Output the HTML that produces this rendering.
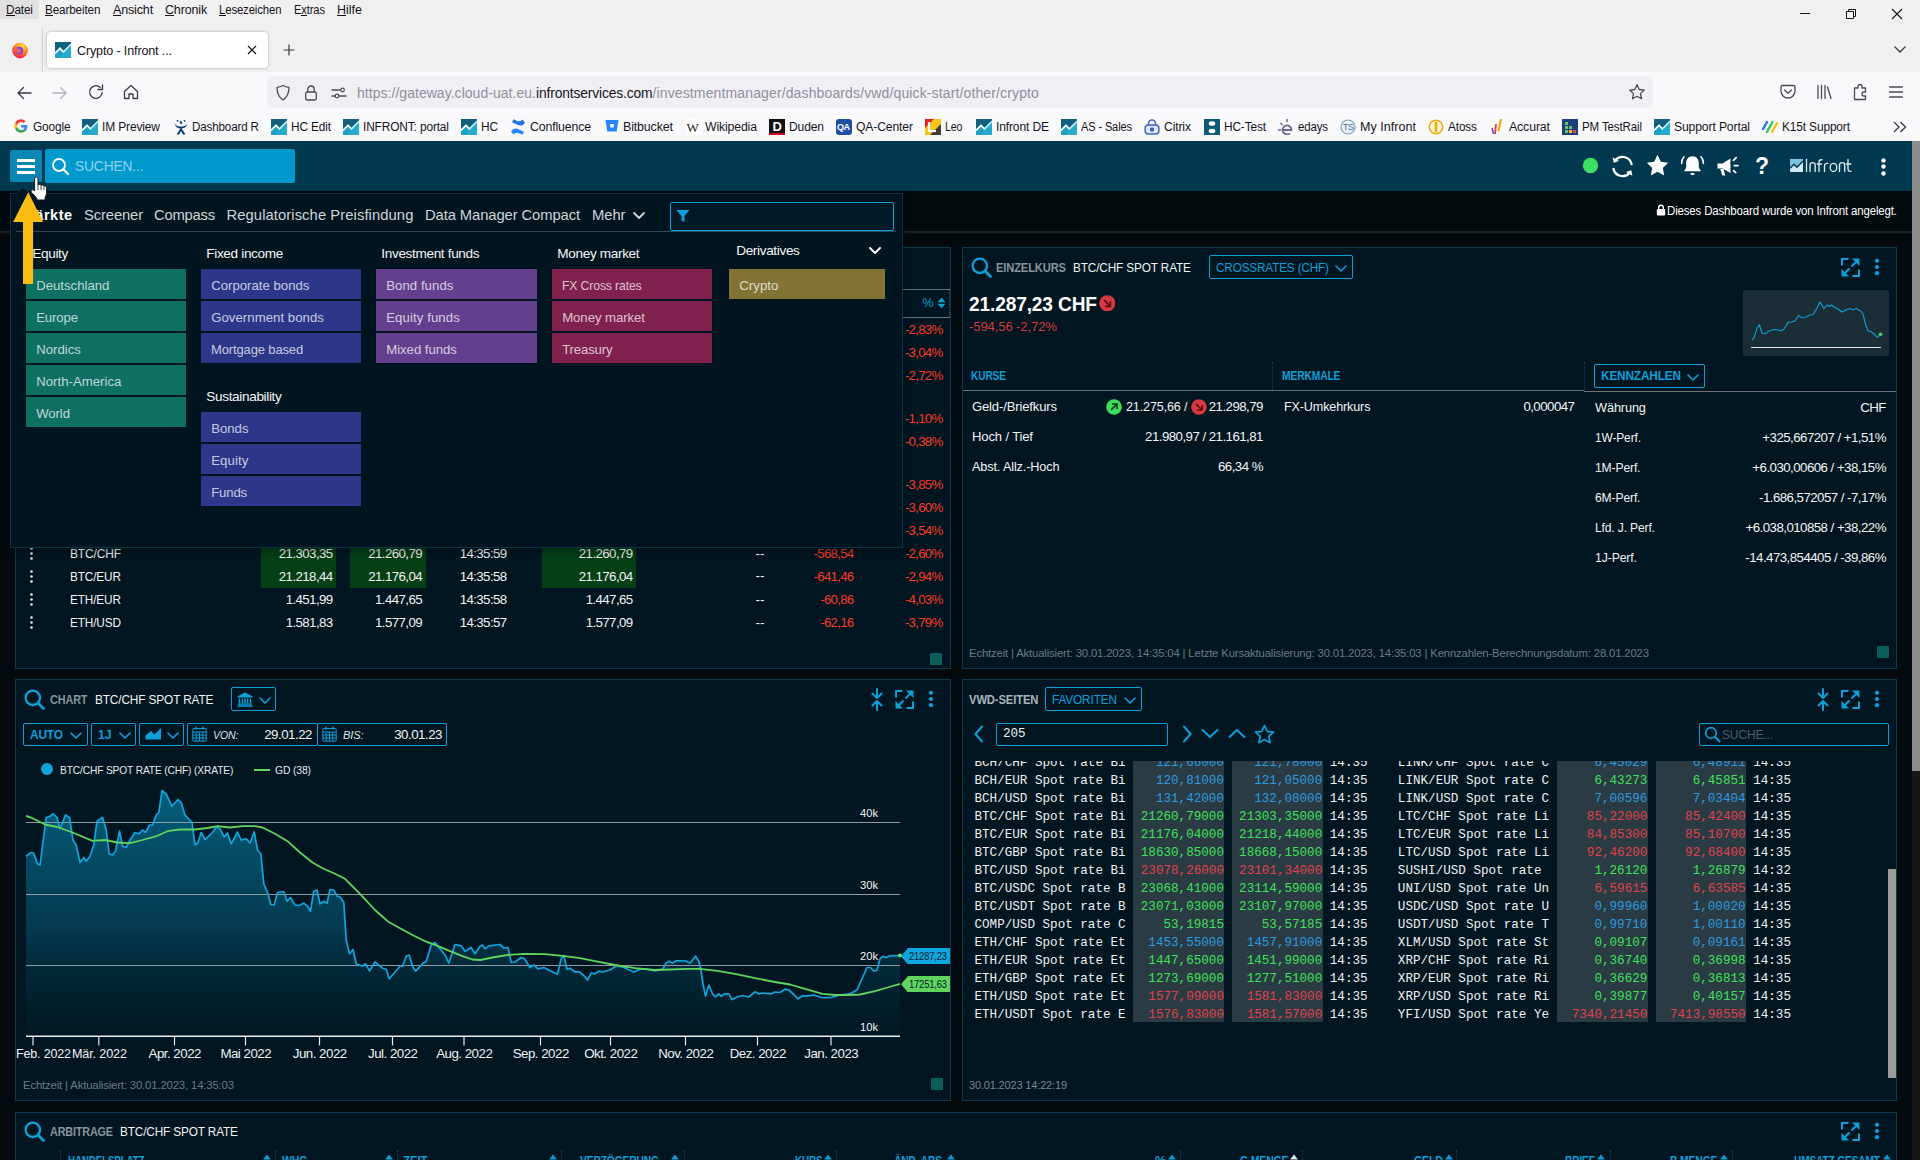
<!DOCTYPE html>
<html lang="de"><head><meta charset="utf-8"><title>Crypto - Infront</title><style>
html,body{margin:0;padding:0;}
body{width:1920px;height:1160px;overflow:hidden;position:relative;background:#02090d;font-family:"Liberation Sans",sans-serif;}
#r{position:absolute;left:0;top:0;width:1920px;height:1160px;overflow:hidden;}
#r div,#r span,#r svg{position:absolute;}
.t{white-space:pre;}
.m{font-family:"Liberation Mono",monospace;}
</style></head><body><div id="r">
<div style="left:0px;top:0px;width:1920px;height:72px;background:#f0f0f1;"></div>
<div style="left:0px;top:72px;width:1920px;height:69px;background:#f9f9fb;"></div>
<div style="left:0px;top:0px;width:39px;height:19px;background:#e1e1e3;"></div>
<span class="t" style="left:6.00px;top:1.50px;font-size:12.5px;line-height:16px;color:#15141a;letter-spacing:-0.150px;transform:scaleX(0.9444);transform-origin:0 50%;">Datei</span>
<div style="left:6px;top:15px;width:9px;height:1px;background:#15141a;"></div>
<span class="t" style="left:45.00px;top:1.50px;font-size:12.5px;line-height:16px;color:#15141a;letter-spacing:-0.150px;transform:scaleX(0.9387);transform-origin:0 50%;">Bearbeiten</span>
<div style="left:45px;top:15px;width:8px;height:1px;background:#15141a;"></div>
<span class="t" style="left:113.00px;top:1.50px;font-size:12.5px;line-height:16px;color:#15141a;letter-spacing:-0.142px;">Ansicht</span>
<div style="left:113px;top:15px;width:8px;height:1px;background:#15141a;"></div>
<span class="t" style="left:165.00px;top:1.50px;font-size:12.5px;line-height:16px;color:#15141a;letter-spacing:-0.153px;">Chronik</span>
<div style="left:165px;top:15px;width:9px;height:1px;background:#15141a;"></div>
<span class="t" style="left:219.00px;top:1.50px;font-size:12.5px;line-height:16px;color:#15141a;letter-spacing:-0.150px;transform:scaleX(0.9097);transform-origin:0 50%;">Lesezeichen</span>
<div style="left:219px;top:15px;width:7px;height:1px;background:#15141a;"></div>
<span class="t" style="left:294.00px;top:1.50px;font-size:12.5px;line-height:16px;color:#15141a;letter-spacing:-0.150px;transform:scaleX(0.8936);transform-origin:0 50%;">Extras</span>
<div style="left:301px;top:15px;width:6px;height:1px;background:#15141a;"></div>
<span class="t" style="left:337.00px;top:1.50px;font-size:12.5px;line-height:16px;color:#15141a;">Hilfe</span>
<div style="left:337px;top:15px;width:9px;height:1px;background:#15141a;"></div>
<svg style="left:1795px;top:4px;" width="20" height="20" viewBox="0 0 20 20"><path d="M5 9.5H15" stroke="#15141a" stroke-width="1" fill="none"/></svg>
<svg style="left:1841px;top:4px;" width="20" height="20" viewBox="0 0 20 20"><path d="M5.5 7.5h7v7h-7zM7.5 7.5v-2h7v7h-2" stroke="#15141a" stroke-width="1" fill="none"/></svg>
<svg style="left:1887px;top:4px;" width="20" height="20" viewBox="0 0 20 20"><path d="M5 5L15 15M15 5L5 15" stroke="#15141a" stroke-width="1.1" fill="none"/></svg>
<svg style="left:11px;top:41px;" width="18" height="18" viewBox="0 0 18 18"><defs><radialGradient id="fx" cx="0.65" cy="0.2" r="0.9"><stop offset="0" stop-color="#ffe14a"/><stop offset="0.45" stop-color="#ff8a16"/><stop offset="0.8" stop-color="#ff3647"/><stop offset="1" stop-color="#e31587"/></radialGradient></defs>
<circle cx="9" cy="9.6" r="7.8" fill="url(#fx)"/><path d="M9 1.5c1 1.6 2.6 2 3.2 3.6-1-.5-2-.4-2.600 0z" fill="#ffbd4f"/><circle cx="8.3" cy="9.6" r="3.9" fill="#7542e5"/><path d="M4 8c1.500-1.500 3.500-.5 5 .3 1 .5 1.800 1.400 1.200 2.600-1 2-4.500 1.700-5.800-.4z" fill="#ff7139" opacity=".75"/></svg>
<div style="left:42px;top:28px;width:1px;height:44px;background:#cfcfd8;"></div>
<div style="left:47px;top:32px;width:221px;height:36px;background:#ffffff;border-radius:4px;box-shadow:0 0 3px rgba(0,0,0,.3);"></div>
<svg style="left:55px;top:42px;" width="16" height="16" viewBox="0 0 16 16"><rect width="16" height="16" fill="#1fa0c4"/><path d="M0 16V10L5 5l3.500 3.500L16 1V0H0z" fill="#12607e"/><path d="M0 11.500L5 6.500l3.500 3.500L16 2.500" stroke="#fff" stroke-width="1.700" fill="none"/><path d="M8.500 10L16 2.500V16H5z" fill="#2fb3d3" opacity=".55"/></svg>
<span class="t" style="left:77.00px;top:41.50px;font-size:13px;line-height:17px;color:#15141a;letter-spacing:-0.150px;transform:scaleX(0.9664);transform-origin:0 50%;">Crypto - Infront ...</span>
<svg style="left:246px;top:44px;" width="12" height="12" viewBox="0 0 12 12"><path d="M2 2L10 10M10 2L2 10" stroke="#15141a" stroke-width="1.2" fill="none"/></svg>
<svg style="left:282px;top:43px;" width="14" height="14" viewBox="0 0 14 14"><path d="M7 1.500V12.500M1.500 7H12.500" stroke="#3a3944" stroke-width="1.2" fill="none"/></svg>
<svg style="left:1893px;top:44px;" width="14" height="10" viewBox="0 0 14 10"><path d="M1.500 2.500L7 8L12.500 2.500" stroke="#3a3944" stroke-width="1.3" fill="none"/></svg>
<svg style="left:15px;top:84px;" width="18" height="18" viewBox="0 0 18 18"><path d="M16 9H3M8.500 3.500L3 9l5.500 5.500" stroke="#3a3944" stroke-width="1.300" fill="none" stroke-linecap="round" stroke-linejoin="round"/></svg>
<svg style="left:51px;top:84px;" width="18" height="18" viewBox="0 0 18 18"><path d="M2 9H15M9.500 3.500L15 9l-5.500 5.500" stroke="#b4b4bc" stroke-width="1.300" fill="none" stroke-linecap="round" stroke-linejoin="round"/></svg>
<svg style="left:87px;top:83px;" width="18" height="18" viewBox="0 0 18 18"><path d="M15.200 9.500a6.300 6.300 0 1 1-2-5.100" stroke="#3a3944" stroke-width="1.300" fill="none" stroke-linecap="round"/><path d="M15.500 2v4.500H11" stroke="#3a3944" stroke-width="1.300" fill="none" stroke-linejoin="round" stroke-linecap="round"/></svg>
<svg style="left:122px;top:83px;" width="18" height="18" viewBox="0 0 18 18"><path d="M2.500 8.500L9 2.500l6.500 6V15.500h-4.500V11h-4v4.500H2.500z" stroke="#3a3944" stroke-width="1.300" fill="none" stroke-linejoin="round"/></svg>
<div style="left:267px;top:76px;width:1386px;height:32px;background:#f0f0f4;border-radius:4px;"></div>
<svg style="left:275px;top:84px;" width="16" height="18" viewBox="0 0 16 18"><path d="M8 1.500c2 1.200 4 1.700 6 1.800c0 5.500-1.800 10-6 12.700C3.800 13.300 2 8.800 2 3.300C4 3.200 6 2.700 8 1.500z" stroke="#4a4a55" stroke-width="1.300" fill="none" stroke-linejoin="round"/></svg>
<svg style="left:304px;top:84px;" width="14" height="18" viewBox="0 0 14 18"><rect x="1.700" y="8" width="10.600" height="8" rx="1.500" stroke="#4a4a55" stroke-width="1.300" fill="none"/><path d="M3.800 8V5.200a3.200 3.200 0 0 1 6.400 0V8" stroke="#4a4a55" stroke-width="1.300" fill="none"/></svg>
<svg style="left:331px;top:86px;" width="16" height="14" viewBox="0 0 16 14"><path d="M1 4H9M1 10H4M8 10H15" stroke="#4a4a55" stroke-width="1.300" fill="none" stroke-linecap="round"/><circle cx="11.500" cy="4" r="1.800" stroke="#4a4a55" stroke-width="1.200" fill="none"/><circle cx="6" cy="10" r="1.800" stroke="#4a4a55" stroke-width="1.200" fill="none"/></svg>
<span class="t" style="left:357.00px;top:84.00px;font-size:14px;line-height:18px;color:#8f8f9d;letter-spacing:0.036px;">https://gateway.cloud-uat.eu.</span>
<span class="t" style="left:536.00px;top:84.00px;font-size:14px;line-height:18px;color:#15141a;letter-spacing:-0.150px;transform:scaleX(0.9882);transform-origin:0 50%;">infrontservices.com</span>
<span class="t" style="left:652.50px;top:84.00px;font-size:14px;line-height:18px;color:#8f8f9d;letter-spacing:0.130px;">/investmentmanager/dashboards/vwd/quick-start/other/crypto</span>
<svg style="left:1628px;top:83px;" width="18" height="18" viewBox="0 0 18 18"><path d="M9 1.800l2.200 4.700 5 .6-3.700 3.500 1 5.100L9 13.200l-4.500 2.500 1-5.100L1.800 7.100l5-.6z" stroke="#4a4a55" stroke-width="1.300" fill="none" stroke-linejoin="round"/></svg>
<svg style="left:1779px;top:84px;" width="18" height="16" viewBox="0 0 18 16"><path d="M3.500 1.500h11a1.500 1.500 0 0 1 1.500 1.500v4a7 7 0 0 1-14 0V3a1.500 1.500 0 0 1 1.500-1.500z" stroke="#4a4a55" stroke-width="1.300" fill="none"/><path d="M5.500 6L9 9.300 12.500 6" stroke="#4a4a55" stroke-width="1.300" fill="none" stroke-linecap="round" stroke-linejoin="round"/></svg>
<svg style="left:1816px;top:84px;" width="16" height="16" viewBox="0 0 16 16"><path d="M2 1.500V14.500M5.500 1.500V14.500M9 1.500V14.500M11.500 3L15 14.500" stroke="#4a4a55" stroke-width="1.300" fill="none" stroke-linecap="round"/></svg>
<svg style="left:1852px;top:83px;" width="16" height="18" viewBox="0 0 16 18"><path d="M6 3.500a2 2 0 0 1 4 0V5h3.500v4H12a2 2 0 0 0 0 4h1.500v3.500h-11V5H6z" stroke="#4a4a55" stroke-width="1.300" fill="none" stroke-linejoin="round"/></svg>
<svg style="left:1888px;top:85px;" width="16" height="14" viewBox="0 0 16 14"><path d="M1.500 2H14.500M1.500 7H14.500M1.500 12H14.500" stroke="#4a4a55" stroke-width="1.300" fill="none" stroke-linecap="round"/></svg>
<svg style="left:14px;top:119px;" width="14" height="14" viewBox="0 0 14 14"><path d="M13.400 7.200c0-.5 0-.9-.1-1.300H7v2.500h3.600c-.2.800-.6 1.500-1.300 2v1.700h2.100c1.300-1.200 2-2.900 2-4.900z" fill="#4285f4"/><path d="M7 13.700c1.800 0 3.300-.6 4.400-1.600l-2.100-1.700c-.6.400-1.400.600-2.300.600-1.700 0-3.200-1.200-3.700-2.700H1.100v1.700C2.200 12.200 4.400 13.700 7 13.700z" fill="#34a853"/><path d="M3.300 8.300a4 4 0 0 1 0-2.600V4H1.100a6.700 6.700 0 0 0 0 6z" fill="#fbbc05"/><path d="M7 3c1 0 1.900.3 2.600 1l1.900-1.900C10.300 1 8.800.3 7 .3 4.400.3 2.200 1.800 1.100 4l2.200 1.700C3.800 4.200 5.300 3 7 3z" fill="#ea4335"/></svg>
<span class="t" style="left:32.50px;top:119.00px;font-size:12.5px;line-height:16px;color:#15141a;letter-spacing:-0.150px;transform:scaleX(0.9478);transform-origin:0 50%;">Google</span>
<svg style="left:82px;top:119px;" width="16" height="16" viewBox="0 0 16 16"><rect width="16" height="16" fill="#1fa0c4"/><path d="M0 16V10L5 5l3.500 3.500L16 1V0H0z" fill="#12607e"/><path d="M0 11.500L5 6.500l3.500 3.500L16 2.500" stroke="#fff" stroke-width="1.700" fill="none"/><path d="M8.500 10L16 2.500V16H5z" fill="#2fb3d3" opacity=".55"/></svg>
<span class="t" style="left:102.00px;top:119.00px;font-size:12.5px;line-height:16px;color:#15141a;letter-spacing:-0.150px;transform:scaleX(0.9591);transform-origin:0 50%;">IM Preview</span>
<svg style="left:172.5px;top:119px;" width="16" height="16" viewBox="0 0 16 16"><circle cx="8" cy="3.600" r="1.300" fill="#0b3d78"/><circle cx="4.500" cy="1.800" r=".9" fill="#0b3d78"/><circle cx="11.500" cy="1.800" r=".9" fill="#0b3d78"/><path d="M1.500 4.500C3 9 5.500 9.500 8 9.500S13 9 14.500 4.500C13 7 10.500 7.500 8 7.500S3 7 1.500 4.500zM8 8.500L3.500 15.500h2.600L8 12l1.900 3.500h2.600z" fill="#0b3d78"/></svg>
<span class="t" style="left:192.00px;top:119.00px;font-size:12.5px;line-height:16px;color:#15141a;letter-spacing:-0.150px;transform:scaleX(0.9285);transform-origin:0 50%;">Dashboard R</span>
<svg style="left:271px;top:119px;" width="16" height="16" viewBox="0 0 16 16"><rect width="16" height="16" fill="#1fa0c4"/><path d="M0 16V10L5 5l3.500 3.500L16 1V0H0z" fill="#12607e"/><path d="M0 11.500L5 6.500l3.500 3.500L16 2.500" stroke="#fff" stroke-width="1.700" fill="none"/><path d="M8.500 10L16 2.500V16H5z" fill="#2fb3d3" opacity=".55"/></svg>
<span class="t" style="left:291.00px;top:119.00px;font-size:12.5px;line-height:16px;color:#15141a;letter-spacing:-0.150px;transform:scaleX(0.9484);transform-origin:0 50%;">HC Edit</span>
<svg style="left:343px;top:119px;" width="16" height="16" viewBox="0 0 16 16"><rect width="16" height="16" fill="#1fa0c4"/><path d="M0 16V10L5 5l3.500 3.500L16 1V0H0z" fill="#12607e"/><path d="M0 11.500L5 6.500l3.500 3.500L16 2.500" stroke="#fff" stroke-width="1.700" fill="none"/><path d="M8.500 10L16 2.500V16H5z" fill="#2fb3d3" opacity=".55"/></svg>
<span class="t" style="left:363.00px;top:119.00px;font-size:12.5px;line-height:16px;color:#15141a;letter-spacing:-0.150px;transform:scaleX(0.9525);transform-origin:0 50%;">INFRONT: portal</span>
<svg style="left:461px;top:119px;" width="16" height="16" viewBox="0 0 16 16"><rect width="16" height="16" fill="#1fa0c4"/><path d="M0 16V10L5 5l3.500 3.500L16 1V0H0z" fill="#12607e"/><path d="M0 11.500L5 6.500l3.500 3.500L16 2.500" stroke="#fff" stroke-width="1.700" fill="none"/><path d="M8.500 10L16 2.500V16H5z" fill="#2fb3d3" opacity=".55"/></svg>
<span class="t" style="left:481.00px;top:119.00px;font-size:12.5px;line-height:16px;color:#15141a;letter-spacing:-0.150px;transform:scaleX(0.9491);transform-origin:0 50%;">HC</span>
<svg style="left:510px;top:119px;" width="16" height="16" viewBox="0 0 16 16"><path d="M1 12.500c2.500-4 5-3.500 8-2l5 2.300-1.500 3c-4-2-6-3.500-9-.3z" fill="#2684ff"/><path d="M15 3.500c-2.500 4-5 3.500-8 2L2 3.200 3.500.2c4 2 6 3.500 9 .3z" fill="#2173e6"/></svg>
<span class="t" style="left:530.00px;top:119.00px;font-size:12.5px;line-height:16px;color:#15141a;letter-spacing:-0.150px;transform:scaleX(0.9856);transform-origin:0 50%;">Confluence</span>
<svg style="left:605px;top:119px;" width="14" height="14" viewBox="0 0 14 14"><path d="M.5 1h13l-1.800 11.500H2.300z" fill="#2684ff"/><path d="M5 5h4l-.5 3.500h-3z" fill="#fff"/></svg>
<span class="t" style="left:623.00px;top:119.00px;font-size:12.5px;line-height:16px;color:#15141a;letter-spacing:-0.150px;transform:scaleX(0.9957);transform-origin:0 50%;">Bitbucket</span>
<div style="left:685.5px;top:119px;width:16px;height:16px;background:#fff;border-radius:3px;"></div>
<span class="t" style="left:686.50px;top:119.00px;font-size:13px;line-height:17px;color:#222;font-family:'Liberation Serif',serif;">W</span>
<span class="t" style="left:705.00px;top:119.00px;font-size:12.5px;line-height:16px;color:#15141a;letter-spacing:-0.150px;transform:scaleX(0.9813);transform-origin:0 50%;">Wikipedia</span>
<div style="left:769px;top:119px;width:16px;height:16px;background:#111;"></div>
<div style="left:769px;top:133px;width:16px;height:2px;background:#d8001a;"></div>
<span class="t" style="left:772.50px;top:118.00px;font-size:13px;line-height:17px;color:#fff;font-weight:700;">D</span>
<span class="t" style="left:789.00px;top:119.00px;font-size:12.5px;line-height:16px;color:#15141a;letter-spacing:-0.150px;transform:scaleX(0.9658);transform-origin:0 50%;">Duden</span>
<div style="left:836px;top:119px;width:16px;height:16px;background:#1f4fa3;border-radius:3px;"></div>
<span class="t" style="left:837.00px;top:120.50px;font-size:9px;line-height:12px;color:#fff;font-weight:700;letter-spacing:-0.600px;">QA</span>
<span class="t" style="left:856.00px;top:119.00px;font-size:12.5px;line-height:16px;color:#15141a;letter-spacing:-0.150px;transform:scaleX(0.9736);transform-origin:0 50%;">QA-Center</span>
<div style="left:925px;top:119px;width:16px;height:16px;background:#f3c61a;"></div>
<svg style="left:925px;top:119px;" width="16" height="16" viewBox="0 0 16 16"><path d="M0 0L9 0L0 9z" fill="#d22"/><path d="M16 5v11H5z" fill="#224" opacity=".85"/><path d="M4 3v9h7" stroke="#fff" stroke-width="2.200" fill="none"/></svg>
<span class="t" style="left:945.00px;top:119.00px;font-size:12.5px;line-height:16px;color:#15141a;letter-spacing:-0.150px;transform:scaleX(0.8502);transform-origin:0 50%;">Leo</span>
<svg style="left:976px;top:119px;" width="16" height="16" viewBox="0 0 16 16"><rect width="16" height="16" fill="#1fa0c4"/><path d="M0 16V10L5 5l3.500 3.500L16 1V0H0z" fill="#12607e"/><path d="M0 11.500L5 6.500l3.500 3.500L16 2.500" stroke="#fff" stroke-width="1.700" fill="none"/><path d="M8.500 10L16 2.500V16H5z" fill="#2fb3d3" opacity=".55"/></svg>
<span class="t" style="left:996.00px;top:119.00px;font-size:12.5px;line-height:16px;color:#15141a;letter-spacing:-0.150px;transform:scaleX(0.9649);transform-origin:0 50%;">Infront DE</span>
<svg style="left:1061px;top:119px;" width="16" height="16" viewBox="0 0 16 16"><rect width="16" height="16" fill="#1fa0c4"/><path d="M0 16V10L5 5l3.500 3.500L16 1V0H0z" fill="#12607e"/><path d="M0 11.500L5 6.500l3.500 3.500L16 2.500" stroke="#fff" stroke-width="1.700" fill="none"/><path d="M8.500 10L16 2.500V16H5z" fill="#2fb3d3" opacity=".55"/></svg>
<span class="t" style="left:1081.00px;top:119.00px;font-size:12.5px;line-height:16px;color:#15141a;letter-spacing:-0.150px;transform:scaleX(0.8835);transform-origin:0 50%;">AS - Sales</span>
<svg style="left:1144px;top:119px;" width="16" height="16" viewBox="0 0 16 16"><rect x="1.200" y="6" width="13.600" height="9" rx="3" stroke="#3a63c8" stroke-width="1.500" fill="#dfe8ff"/><path d="M4.500 6V4.500a3.500 3.500 0 0 1 7 0V6" stroke="#3a63c8" stroke-width="1.500" fill="none"/><rect x="6" y="8.500" width="4" height="4" rx="1" fill="#3a63c8"/></svg>
<span class="t" style="left:1164.00px;top:119.00px;font-size:12.5px;line-height:16px;color:#15141a;letter-spacing:-0.150px;transform:scaleX(0.9740);transform-origin:0 50%;">Citrix</span>
<div style="left:1204px;top:119px;width:16px;height:16px;background:#0c5a7a;"></div>
<svg style="left:1204px;top:119px;" width="16" height="16" viewBox="0 0 16 16"><ellipse cx="8" cy="4.500" rx="3.300" ry="2.300" fill="#fff"/><ellipse cx="8" cy="12" rx="3.300" ry="2.300" fill="#fff"/></svg>
<span class="t" style="left:1224.00px;top:119.00px;font-size:12.5px;line-height:16px;color:#15141a;letter-spacing:-0.150px;transform:scaleX(0.9492);transform-origin:0 50%;">HC-Test</span>
<svg style="left:1278px;top:119px;" width="16" height="16" viewBox="0 0 16 16"><path d="M4.500 11h9a4.500 4.500 0 1 0-1.500 3.300" stroke="#6d6a8a" stroke-width="1.800" fill="none"/><path d="M0 11h3M2.500 4l2 2M9 0v3" stroke="#6d6a8a" stroke-width="1.500"/></svg>
<span class="t" style="left:1298.00px;top:119.00px;font-size:12.5px;line-height:16px;color:#15141a;letter-spacing:-0.150px;transform:scaleX(0.9155);transform-origin:0 50%;">edays</span>
<svg style="left:1340px;top:119px;" width="16" height="16" viewBox="0 0 16 16"><circle cx="8" cy="8" r="7" stroke="#7f9fbe" stroke-width="1.200" fill="#eef3f8"/></svg>
<span class="t" style="left:1343.00px;top:121.00px;font-size:9px;line-height:12px;color:#3f6f9f;letter-spacing:-0.500px;">TS</span>
<span class="t" style="left:1360.00px;top:119.00px;font-size:12.5px;line-height:16px;color:#15141a;letter-spacing:0.043px;">My Infront</span>
<svg style="left:1428px;top:119px;" width="16" height="16" viewBox="0 0 16 16"><circle cx="8" cy="8" r="6.800" stroke="#f0a800" stroke-width="1.400" fill="#fff6d8"/><path d="M8 4v8" stroke="#f0a800" stroke-width="2.600" stroke-linecap="round"/></svg>
<span class="t" style="left:1448.00px;top:119.00px;font-size:12.5px;line-height:16px;color:#15141a;letter-spacing:-0.150px;transform:scaleX(0.9455);transform-origin:0 50%;">Atoss</span>
<svg style="left:1490px;top:119px;" width="14" height="16" viewBox="0 0 14 16"><path d="M2 9l1.500 6" stroke="#6a4fc8" stroke-width="1.600"/><path d="M6 5l-1 10" stroke="#e63946" stroke-width="1.800"/><path d="M11 0L8.500 12" stroke="#f4a300" stroke-width="2"/></svg>
<span class="t" style="left:1509.00px;top:119.00px;font-size:12.5px;line-height:16px;color:#15141a;letter-spacing:-0.150px;transform:scaleX(0.9885);transform-origin:0 50%;">Accurat</span>
<div style="left:1562px;top:119px;width:16px;height:16px;background:#1d3f7a;"></div>
<svg style="left:1562px;top:119px;" width="16" height="16" viewBox="0 0 16 16"><rect x="3" y="3" width="3" height="3" fill="#65c466"/><rect x="3" y="7" width="3" height="3" fill="#65c466"/><rect x="3" y="11" width="3" height="3" fill="#65c466"/><rect x="7" y="7" width="3" height="3" fill="#65c466"/><rect x="7" y="11" width="3" height="3" fill="#f4c20d"/><rect x="11" y="11" width="3" height="3" fill="#e5484d"/></svg>
<span class="t" style="left:1582.00px;top:119.00px;font-size:12.5px;line-height:16px;color:#15141a;letter-spacing:-0.150px;transform:scaleX(0.9235);transform-origin:0 50%;">PM TestRail</span>
<svg style="left:1654px;top:119px;" width="16" height="16" viewBox="0 0 16 16"><rect width="16" height="16" fill="#1fa0c4"/><path d="M0 16V10L5 5l3.500 3.500L16 1V0H0z" fill="#12607e"/><path d="M0 11.500L5 6.500l3.500 3.500L16 2.500" stroke="#fff" stroke-width="1.700" fill="none"/><path d="M8.500 10L16 2.500V16H5z" fill="#2fb3d3" opacity=".55"/></svg>
<span class="t" style="left:1674.00px;top:119.00px;font-size:12.5px;line-height:16px;color:#15141a;letter-spacing:-0.150px;transform:scaleX(0.9748);transform-origin:0 50%;">Support Portal</span>
<svg style="left:1762px;top:119px;" width="16" height="16" viewBox="0 0 16 16"><path d="M1 10L5 3" stroke="#2f6fed" stroke-width="2.400" stroke-linecap="round"/><path d="M5 13L10.500 3" stroke="#34c759" stroke-width="2.400" stroke-linecap="round"/><path d="M10 13L15 4" stroke="#f4c20d" stroke-width="2.400" stroke-linecap="round"/></svg>
<span class="t" style="left:1782.00px;top:119.00px;font-size:12.5px;line-height:16px;color:#15141a;letter-spacing:-0.150px;transform:scaleX(0.9534);transform-origin:0 50%;">K15t Support</span>
<svg style="left:1892px;top:120px;" width="16" height="14" viewBox="0 0 16 14"><path d="M2 2l5 5-5 5M8.500 2l5 5-5 5" stroke="#3a3944" stroke-width="1.300" fill="none"/></svg>
<div style="left:0px;top:141px;width:1912px;height:50px;background:#003850;"></div>
<div style="left:0px;top:191px;width:1912px;height:41px;background:#020a0e;"></div>
<div style="left:0px;top:231px;width:1912px;height:1px;background:#212527;"></div>
<div style="left:0px;top:232px;width:1912px;height:1px;background:#1a1e20;"></div>
<div style="left:0px;top:233px;width:1912px;height:927px;background:#020a0e;"></div>
<div style="left:0px;top:233px;width:1912px;height:1px;background:#0c1012;"></div>
<div style="left:1912px;top:141px;width:8px;height:1019px;background:#161616;"></div>
<div style="left:1912px;top:141px;width:8px;height:630px;background:#8c8c8c;"></div>
<div style="left:10px;top:150px;width:32px;height:32px;background:#0b86b5;border-radius:2px;"></div>
<div style="left:17px;top:159.2px;width:18px;height:2.6px;background:#fff;"></div>
<div style="left:17px;top:165.3px;width:18px;height:2.6px;background:#fff;"></div>
<div style="left:17px;top:171.4px;width:18px;height:2.6px;background:#fff;"></div>
<div style="left:45px;top:149px;width:250px;height:34px;background:#0099cc;border-radius:2px;"></div>
<svg style="left:50px;top:156px;" width="20" height="20" viewBox="0 0 20 20"><circle cx="9" cy="9" r="6" stroke="#fff" stroke-width="1.800" fill="none"/><path d="M13.300 13.300L18 18" stroke="#fff" stroke-width="2.200" stroke-linecap="round"/></svg>
<span class="t" style="left:74.50px;top:156.00px;font-size:15.5px;line-height:20px;color:#8fd3ee;letter-spacing:-0.150px;transform:scaleX(0.8874);transform-origin:0 50%;">SUCHEN...</span>
<svg style="left:1582px;top:157px;" width="17" height="17" viewBox="0 0 17 17"><circle cx="8.500" cy="8.500" r="7.700" fill="#3ee063"/></svg>
<svg style="left:1609.5px;top:153.5px;" width="25" height="25" viewBox="0 0 25 25"><path d="M21.700 11A9.300 9.300 0 0 0 5.300 6.300" stroke="#fff" stroke-width="2.200" fill="none"/><path d="M3.300 14A9.300 9.300 0 0 0 19.700 18.700" stroke="#fff" stroke-width="2.200" fill="none"/><path d="M2.600 3.200l1.100 5.600 5.300-1.700z" fill="#fff"/><path d="M22.400 21.800l-1.100-5.600-5.300 1.700z" fill="#fff"/></svg>
<svg style="left:1645.5px;top:153.5px;" width="23" height="23" viewBox="0 0 23 23"><path d="M11.500 .8l3.300 6.900 7.400 1-5.400 5.200 1.400 7.500-6.700-3.700-6.700 3.700 1.400-7.500L.8 8.700l7.400-1z" fill="#fff"/></svg>
<svg style="left:1679.5px;top:153.5px;" width="25" height="25" viewBox="0 0 25 25"><path d="M12.500 2.300c-3.900 0-6.300 2.900-6.300 6.800v4.300L4 17.300h17l-2.200-3.900V9.100c0-3.900-2.400-6.800-6.300-6.800z" fill="#fff"/><path d="M10.300 19a2.200 2.200 0 0 0 4.400 0z" fill="#fff"/><path d="M4 2.800A10 10 0 0 0 1.600 9.500M21 2.800A10 10 0 0 1 23.400 9.500" stroke="#fff" stroke-width="1.600" fill="none" stroke-linecap="round"/></svg>
<svg style="left:1714.5px;top:153.5px;" width="25" height="25" viewBox="0 0 25 25"><path d="M2.500 9.500h5L15.500 4.500V19L7.500 14.500h-5z" fill="#fff"/><path d="M5.300 15l2 6.500h3l-1.800-6.500z" fill="#fff"/><path d="M15.500 8.700a3.500 3.500 0 0 1 0 6.200" stroke="#003850" stroke-width="1.300" fill="none"/><path d="M18.500 6.300l2.700-2.700M19.300 11.700H23M18.500 16.700l2.200 2" stroke="#fff" stroke-width="1.700" stroke-linecap="round"/></svg>
<span class="t" style="left:1754.98px;top:151.00px;font-size:23px;line-height:30px;color:#fff;font-weight:700;">?</span>
<svg style="left:1790px;top:159px;" width="13" height="13" viewBox="0 0 13 13"><rect width="13" height="13" fill="#cfe9f5"/><path d="M0 13V8.500L4 4.500l3 3L13 1.200V0H0z" fill="#7cc4e2"/><path d="M0 9.300L4 5.300l3 3L13 2" stroke="#003850" stroke-width="1.500" fill="none"/></svg>
<svg style="left:1805px;top:157px;" width="48" height="17" viewBox="0 0 48 17"><g stroke="#dbe9ef" stroke-width="1.350" fill="none" stroke-linecap="round" stroke-linejoin="round"><path d="M1.500 2.500V14.500"/><path d="M5 14.500V8.200a2.600 2.600 0 0 1 5.200 0V14.500"/><path d="M14 14.500V5a2.300 2.300 0 0 1 2.300-2.300H17M12.300 7h4.200"/><path d="M19.500 14.500V9a2.700 2.700 0 0 1 2.700-2.700H23"/><ellipse cx="28.500" cy="10.400" rx="3.300" ry="4.100"/><path d="M34.500 14.500V8.200a2.600 2.600 0 0 1 5.200 0V14.500"/><path d="M43 2.500V12a2.300 2.300 0 0 0 2.300 2.300H46M41.300 7h4.500"/></g></svg>
<svg style="left:1880.5px;top:157.7px;" width="5" height="5" viewBox="0 0 5 5"><circle cx="2.500" cy="2.500" r="2.200" fill="#fff"/></svg>
<svg style="left:1880.5px;top:164.2px;" width="5" height="5" viewBox="0 0 5 5"><circle cx="2.500" cy="2.500" r="2.200" fill="#fff"/></svg>
<svg style="left:1880.5px;top:170.7px;" width="5" height="5" viewBox="0 0 5 5"><circle cx="2.500" cy="2.500" r="2.200" fill="#fff"/></svg>
<svg style="left:1655.5px;top:204px;" width="10" height="12" viewBox="0 0 10 12"><rect x=".8" y="5" width="8.400" height="6.500" rx="1" fill="#fff"/><path d="M2.700 5V3.600a2.300 2.300 0 0 1 4.600 0V5" stroke="#fff" stroke-width="1.400" fill="none"/></svg>
<span class="t" style="left:1667.00px;top:203.00px;font-size:12px;line-height:16px;color:#fff;letter-spacing:-0.150px;transform:scaleX(0.9542);transform-origin:0 50%;">Dieses Dashboard wurde von Infront angelegt.</span>
<div style="left:15px;top:247px;width:934px;height:420px;background:#011621;border:1px solid #0b3a50;"></div>
<div style="left:962px;top:247px;width:933px;height:420px;background:#011621;border:1px solid #0b3a50;"></div>
<div style="left:15px;top:679px;width:934px;height:420px;background:#011621;border:1px solid #0b3a50;"></div>
<div style="left:962px;top:679px;width:933px;height:420px;background:#011621;border:1px solid #0b3a50;"></div>
<div style="left:15px;top:1112px;width:1880px;height:58px;background:#011621;border:1px solid #0b3a50;"></div>
<svg style="left:970.5px;top:257px;" width="21" height="21" viewBox="0 0 21 21"><circle cx="8.800" cy="8.800" r="7.200" stroke="#0d9fd8" stroke-width="2.300" fill="none"/><path d="M14 14L19.500 19.500" stroke="#0d9fd8" stroke-width="2.800" stroke-linecap="round"/></svg>
<span class="t" style="left:996.00px;top:259.50px;font-size:12.5px;line-height:16px;color:#8a949a;font-weight:700;letter-spacing:-0.150px;transform:scaleX(0.8913);transform-origin:0 50%;">EINZELKURS</span>
<span class="t" style="left:1073.00px;top:259.50px;font-size:12.5px;line-height:16px;color:#f2f4f5;letter-spacing:-0.150px;transform:scaleX(0.9445);transform-origin:0 50%;">BTC/CHF SPOT RATE</span>
<div style="left:1209px;top:255px;width:142px;height:22px;border:1px solid #0d9fd8;border-radius:2px;"></div>
<span class="t" style="left:1216.00px;top:259.50px;font-size:12.5px;line-height:16px;color:#0d9fd8;letter-spacing:-0.150px;transform:scaleX(0.9382);transform-origin:0 50%;">CROSSRATES (CHF)</span>
<svg style="left:1335.0px;top:265.0px;" width="12.0" height="7.0" viewBox="0 0 12 7"><path d="M1 1L6 6L11 1" stroke="#0d9fd8" stroke-width="1.6" fill="none" stroke-linecap="round" stroke-linejoin="round"/></svg>
<svg style="left:1840.5px;top:258px;" width="19" height="19" viewBox="0 0 19 19"><g stroke="#0d9fd8" stroke-width="2" fill="none"><path d="M1 7.500V1H7.500"/><path d="M18 11.500V18H11.500"/><path d="M8.500 10.500L2.500 16.500M10.500 8.500L16.500 2.500"/></g><path d="M11 .5H18.500V8z" fill="#0d9fd8"/><path d="M.5 11V18.500H8z" fill="#0d9fd8"/></svg>
<svg style="left:1874px;top:258px;" width="6" height="18" viewBox="0 0 6 18"><circle cx="3" cy="2.800" r="2.100" fill="#0d9fd8"/><circle cx="3" cy="9" r="2.100" fill="#0d9fd8"/><circle cx="3" cy="15.200" r="2.100" fill="#0d9fd8"/></svg>
<span class="t" style="left:969.00px;top:291.50px;font-size:19.5px;line-height:25px;color:#fff;font-weight:700;letter-spacing:-0.150px;transform:scaleX(0.9812);transform-origin:0 50%;">21.287,23 CHF</span>
<svg style="left:1098.7px;top:294.7px;" width="16.6" height="16.6" viewBox="0 0 16 16"><circle cx="8" cy="8" r="7.800" fill="#d7373f"/><path d="M5 5L10.500 10.500M6 11h5V6" stroke="#5a0d12" stroke-width="1.600" fill="none"/></svg>
<span class="t" style="left:969.00px;top:318.00px;font-size:13.5px;line-height:18px;color:#d23c3c;letter-spacing:-0.150px;transform:scaleX(0.9738);transform-origin:0 50%;">-594,56 -2,72%</span>
<div style="left:1743px;top:290px;width:146px;height:66px;background:#1b2d37;border-radius:2px;"></div>
<div style="left:1751px;top:346.5px;width:130px;height:1.6px;background:#e0e0e0;"></div>
<svg style="left:1743px;top:290px;" width="146" height="66" viewBox="0 0 146 66"><polyline points="9.0,50.0 11.0,48.0 14.0,38.0 16.5,35.0 19.0,43.0 22.0,44.0 26.0,41.0 31.0,39.5 35.0,40.0 38.0,41.0 41.0,39.0 45.0,32.5 48.0,32.0 52.0,31.0 55.5,25.5 59.0,28.0 63.0,27.0 67.0,25.0 70.0,24.5 73.5,19.0 77.0,12.0 81.0,18.5 84.0,15.0 86.0,16.5 88.5,15.0 92.0,17.5 95.0,19.0 99.0,22.0 103.0,20.0 107.0,18.5 110.0,20.0 113.0,18.5 117.0,20.5 120.0,24.0 122.5,34.0 125.0,41.0 128.0,41.5 131.0,44.0 134.5,47.5 137.5,44.0" stroke="#0d9fd8" stroke-width="1.100" fill="none"/><circle cx="137.600" cy="44.300" r="1.800" fill="#3ddc5f"/></svg>
<span class="t" style="left:971.00px;top:367.50px;font-size:12.5px;line-height:16px;color:#0d9fd8;font-weight:700;letter-spacing:-0.150px;transform:scaleX(0.8103);transform-origin:0 50%;">KURSE</span>
<span class="t" style="left:1282.00px;top:367.50px;font-size:12.5px;line-height:16px;color:#0d9fd8;font-weight:700;letter-spacing:-0.150px;transform:scaleX(0.8216);transform-origin:0 50%;">MERKMALE</span>
<div style="left:963px;top:390px;width:621px;height:1.3px;background:#6b7378;"></div>
<div style="left:1584px;top:391px;width:312px;height:1.3px;background:#6b7378;"></div>
<div style="left:1272px;top:362px;width:1px;height:28px;border-left:1px dotted #17425a;"></div>
<div style="left:1584px;top:362px;width:1px;height:28px;border-left:1px dotted #17425a;"></div>
<div style="left:1594px;top:364px;width:109px;height:22px;border:1px solid #0d9fd8;border-radius:2px;"></div>
<span class="t" style="left:1600.50px;top:368.00px;font-size:12.5px;line-height:16px;color:#0d9fd8;font-weight:700;letter-spacing:-0.150px;transform:scaleX(0.9438);transform-origin:0 50%;">KENNZAHLEN</span>
<svg style="left:1687.0px;top:373.5px;" width="12.0" height="7.0" viewBox="0 0 12 7"><path d="M1 1L6 6L11 1" stroke="#0d9fd8" stroke-width="1.6" fill="none" stroke-linecap="round" stroke-linejoin="round"/></svg>
<span class="t" style="left:972.00px;top:398.00px;font-size:13.3px;line-height:17px;color:#f2f4f5;letter-spacing:-0.150px;transform:scaleX(0.9816);transform-origin:0 50%;">Geld-/Briefkurs</span>
<svg style="left:1105.5px;top:398.5px;" width="16" height="16" viewBox="0 0 16 16"><circle cx="8" cy="8" r="7.800" fill="#3ddc5f"/><path d="M5 11L10.500 5.500M6 5h5v5" stroke="#0a3d18" stroke-width="1.600" fill="none"/></svg>
<span class="t" style="left:1125.50px;top:397.50px;font-size:13.3px;line-height:17px;color:#f2f4f5;letter-spacing:-0.150px;transform:scaleX(0.9452);transform-origin:0 50%;">21.275,66 /</span>
<svg style="left:1190.5px;top:398.5px;" width="16" height="16" viewBox="0 0 16 16"><circle cx="8" cy="8" r="7.800" fill="#d7373f"/><path d="M5 5L10.500 10.500M6 11h5V6" stroke="#5a0d12" stroke-width="1.600" fill="none"/></svg>
<span class="t" style="left:1208.73px;top:397.50px;font-size:13.3px;line-height:17px;color:#f2f4f5;letter-spacing:-0.550px;">21.298,79</span>
<span class="t" style="left:972.00px;top:427.50px;font-size:13.3px;line-height:17px;color:#f2f4f5;letter-spacing:-0.150px;transform:scaleX(0.9827);transform-origin:0 50%;">Hoch / Tief</span>
<span class="t" style="left:1145.08px;top:427.50px;font-size:13.3px;line-height:17px;color:#f2f4f5;letter-spacing:-0.550px;">21.980,97 / 21.161,81</span>
<span class="t" style="left:972.00px;top:458.20px;font-size:13.3px;line-height:17px;color:#f2f4f5;letter-spacing:-0.150px;transform:scaleX(0.9549);transform-origin:0 50%;">Abst. Allz.-Hoch</span>
<span class="t" style="left:1218.00px;top:458.20px;font-size:13.3px;line-height:17px;color:#f2f4f5;letter-spacing:-0.550px;">66,34 %</span>
<span class="t" style="left:1283.50px;top:398.00px;font-size:13.3px;line-height:17px;color:#f2f4f5;letter-spacing:-0.150px;transform:scaleX(0.9473);transform-origin:0 50%;">FX-Umkehrkurs</span>
<span class="t" style="left:1523.38px;top:398.00px;font-size:13.3px;line-height:17px;color:#f2f4f5;letter-spacing:-0.550px;">0,000047</span>
<span class="t" style="left:1595.00px;top:399.00px;font-size:13.3px;line-height:17px;color:#f2f4f5;letter-spacing:-0.150px;transform:scaleX(0.9609);transform-origin:0 50%;">Währung</span>
<span class="t" style="left:1860.27px;top:399.00px;font-size:13.3px;line-height:17px;color:#f2f4f5;letter-spacing:-0.550px;">CHF</span>
<span class="t" style="left:1595.00px;top:429.00px;font-size:13.3px;line-height:17px;color:#f2f4f5;letter-spacing:-0.150px;transform:scaleX(0.8986);transform-origin:0 50%;">1W-Perf.</span>
<span class="t" style="left:1762.35px;top:429.00px;font-size:13.3px;line-height:17px;color:#f2f4f5;letter-spacing:-0.550px;">+325,667207 / +1,51%</span>
<span class="t" style="left:1595.00px;top:459.00px;font-size:13.3px;line-height:17px;color:#f2f4f5;letter-spacing:-0.150px;transform:scaleX(0.9108);transform-origin:0 50%;">1M-Perf.</span>
<span class="t" style="left:1752.36px;top:459.00px;font-size:13.3px;line-height:17px;color:#f2f4f5;letter-spacing:-0.550px;">+6.030,00606 / +38,15%</span>
<span class="t" style="left:1595.00px;top:489.00px;font-size:13.3px;line-height:17px;color:#f2f4f5;letter-spacing:-0.150px;transform:scaleX(0.9108);transform-origin:0 50%;">6M-Perf.</span>
<span class="t" style="left:1759.04px;top:489.00px;font-size:13.3px;line-height:17px;color:#f2f4f5;letter-spacing:-0.550px;">-1.686,572057 / -7,17%</span>
<span class="t" style="left:1595.00px;top:519.00px;font-size:13.3px;line-height:17px;color:#f2f4f5;letter-spacing:-0.150px;transform:scaleX(0.9060);transform-origin:0 50%;">Lfd. J. Perf.</span>
<span class="t" style="left:1745.51px;top:519.00px;font-size:13.3px;line-height:17px;color:#f2f4f5;letter-spacing:-0.550px;">+6.038,010858 / +38,22%</span>
<span class="t" style="left:1595.00px;top:549.00px;font-size:13.3px;line-height:17px;color:#f2f4f5;letter-spacing:-0.150px;transform:scaleX(0.9226);transform-origin:0 50%;">1J-Perf.</span>
<span class="t" style="left:1745.34px;top:549.00px;font-size:13.3px;line-height:17px;color:#f2f4f5;letter-spacing:-0.550px;">-14.473,854405 / -39,86%</span>
<span class="t" style="left:969.00px;top:645.50px;font-size:11.5px;line-height:15px;color:#6d7b83;letter-spacing:-0.150px;transform:scaleX(0.9829);transform-origin:0 50%;">Echtzeit | Aktualisiert: 30.01.2023, 14:35:04 | Letzte Kursaktualisierung: 30.01.2023, 14:35:03 | Kennzahlen-Berechnungsdatum: 28.01.2023</span>
<div style="left:1877px;top:646px;width:12px;height:12px;background:#0b5d5c;border-radius:1px;"></div>
<div style="left:16px;top:288.5px;width:934px;height:1.2px;background:#6b7378;"></div>
<div style="left:16px;top:317.2px;width:934px;height:1.2px;background:#6b7378;"></div>
<span class="t" style="left:922.39px;top:295.00px;font-size:12.5px;line-height:16px;color:#0d9fd8;">%</span>
<svg style="left:936.5px;top:297px;" width="9" height="12" viewBox="0 0 9 12"><path d="M4.500 .8L8.500 5.200H.5z" fill="#0d9fd8"/><path d="M4.500 11.200L8.500 6.800H.5z" fill="#0d9fd8"/></svg>
<div style="left:949px;top:290px;width:1px;height:27px;border-left:1px dotted #2a5a73;"></div>
<span class="t" style="left:904.91px;top:321.00px;font-size:13.3px;line-height:17px;color:#fb3a24;letter-spacing:-0.750px;">-2,83%</span>
<span class="t" style="left:904.91px;top:344.00px;font-size:13.3px;line-height:17px;color:#fb3a24;letter-spacing:-0.750px;">-3,04%</span>
<span class="t" style="left:904.91px;top:367.00px;font-size:13.3px;line-height:17px;color:#fb3a24;letter-spacing:-0.750px;">-2,72%</span>
<span class="t" style="left:904.91px;top:409.50px;font-size:13.3px;line-height:17px;color:#fb3a24;letter-spacing:-0.750px;">-1,10%</span>
<span class="t" style="left:904.91px;top:432.50px;font-size:13.3px;line-height:17px;color:#fb3a24;letter-spacing:-0.750px;">-0,38%</span>
<span class="t" style="left:904.91px;top:476.00px;font-size:13.3px;line-height:17px;color:#fb3a24;letter-spacing:-0.750px;">-3,85%</span>
<span class="t" style="left:904.91px;top:499.00px;font-size:13.3px;line-height:17px;color:#fb3a24;letter-spacing:-0.750px;">-3,60%</span>
<span class="t" style="left:904.91px;top:522.00px;font-size:13.3px;line-height:17px;color:#fb3a24;letter-spacing:-0.750px;">-3,54%</span>
<span class="t" style="left:904.91px;top:545.00px;font-size:13.3px;line-height:17px;color:#fb3a24;letter-spacing:-0.750px;">-2,60%</span>
<span class="t" style="left:904.91px;top:568.00px;font-size:13.3px;line-height:17px;color:#fb3a24;letter-spacing:-0.750px;">-2,94%</span>
<span class="t" style="left:904.91px;top:591.00px;font-size:13.3px;line-height:17px;color:#fb3a24;letter-spacing:-0.750px;">-4,03%</span>
<span class="t" style="left:904.91px;top:614.00px;font-size:13.3px;line-height:17px;color:#fb3a24;letter-spacing:-0.750px;">-3,79%</span>
<div style="left:261px;top:542px;width:75px;height:46px;background:#053f16;"></div>
<div style="left:350px;top:542px;width:76px;height:46px;background:#053f16;"></div>
<div style="left:542px;top:542px;width:94px;height:46px;background:#053f16;"></div>
<svg style="left:29.5px;top:547.2px;" width="3" height="13" viewBox="0 0 3 13"><circle cx="1.500" cy="1.500" r="1.300" fill="#e8eef0"/><circle cx="1.500" cy="6.500" r="1.300" fill="#e8eef0"/><circle cx="1.500" cy="11.500" r="1.300" fill="#e8eef0"/></svg>
<span class="t" style="left:69.50px;top:545.20px;font-size:13.3px;line-height:17px;color:#f2f4f5;letter-spacing:-0.150px;transform:scaleX(0.8987);transform-origin:0 50%;">BTC/CHF</span>
<span class="t" style="left:278.83px;top:545.20px;font-size:13.3px;line-height:17px;color:#f2f4f5;letter-spacing:-0.600px;">21.303,35</span>
<span class="t" style="left:368.23px;top:545.20px;font-size:13.3px;line-height:17px;color:#f2f4f5;letter-spacing:-0.600px;">21.260,79</span>
<span class="t" style="left:459.63px;top:545.20px;font-size:13.3px;line-height:17px;color:#f2f4f5;letter-spacing:-0.600px;">14:35:59</span>
<span class="t" style="left:578.83px;top:545.20px;font-size:13.3px;line-height:17px;color:#f2f4f5;letter-spacing:-0.600px;">21.260,79</span>
<span class="t" style="left:755.60px;top:544.70px;font-size:13.5px;line-height:18px;color:#f2f4f5;letter-spacing:-0.200px;">--</span>
<span class="t" style="left:813.59px;top:545.20px;font-size:13.3px;line-height:17px;color:#fb3a24;letter-spacing:-0.750px;">-568,54</span>
<svg style="left:29.5px;top:569.8px;" width="3" height="13" viewBox="0 0 3 13"><circle cx="1.500" cy="1.500" r="1.300" fill="#e8eef0"/><circle cx="1.500" cy="6.500" r="1.300" fill="#e8eef0"/><circle cx="1.500" cy="11.500" r="1.300" fill="#e8eef0"/></svg>
<span class="t" style="left:69.50px;top:567.80px;font-size:13.3px;line-height:17px;color:#f2f4f5;letter-spacing:-0.150px;transform:scaleX(0.8870);transform-origin:0 50%;">BTC/EUR</span>
<span class="t" style="left:278.83px;top:567.80px;font-size:13.3px;line-height:17px;color:#f2f4f5;letter-spacing:-0.600px;">21.218,44</span>
<span class="t" style="left:368.23px;top:567.80px;font-size:13.3px;line-height:17px;color:#f2f4f5;letter-spacing:-0.600px;">21.176,04</span>
<span class="t" style="left:459.63px;top:567.80px;font-size:13.3px;line-height:17px;color:#f2f4f5;letter-spacing:-0.600px;">14:35:58</span>
<span class="t" style="left:578.83px;top:567.80px;font-size:13.3px;line-height:17px;color:#f2f4f5;letter-spacing:-0.600px;">21.176,04</span>
<span class="t" style="left:755.60px;top:567.30px;font-size:13.5px;line-height:18px;color:#f2f4f5;letter-spacing:-0.200px;">--</span>
<span class="t" style="left:813.59px;top:567.80px;font-size:13.3px;line-height:17px;color:#fb3a24;letter-spacing:-0.750px;">-641,46</span>
<svg style="left:29.5px;top:593.0px;" width="3" height="13" viewBox="0 0 3 13"><circle cx="1.500" cy="1.500" r="1.300" fill="#e8eef0"/><circle cx="1.500" cy="6.500" r="1.300" fill="#e8eef0"/><circle cx="1.500" cy="11.500" r="1.300" fill="#e8eef0"/></svg>
<span class="t" style="left:69.50px;top:591.00px;font-size:13.3px;line-height:17px;color:#f2f4f5;letter-spacing:-0.150px;transform:scaleX(0.8870);transform-origin:0 50%;">ETH/EUR</span>
<span class="t" style="left:285.63px;top:591.00px;font-size:13.3px;line-height:17px;color:#f2f4f5;letter-spacing:-0.600px;">1.451,99</span>
<span class="t" style="left:375.03px;top:591.00px;font-size:13.3px;line-height:17px;color:#f2f4f5;letter-spacing:-0.600px;">1.447,65</span>
<span class="t" style="left:459.63px;top:591.00px;font-size:13.3px;line-height:17px;color:#f2f4f5;letter-spacing:-0.600px;">14:35:58</span>
<span class="t" style="left:585.63px;top:591.00px;font-size:13.3px;line-height:17px;color:#f2f4f5;letter-spacing:-0.600px;">1.447,65</span>
<span class="t" style="left:755.60px;top:590.50px;font-size:13.5px;line-height:18px;color:#f2f4f5;letter-spacing:-0.200px;">--</span>
<span class="t" style="left:820.24px;top:591.00px;font-size:13.3px;line-height:17px;color:#fb3a24;letter-spacing:-0.750px;">-60,86</span>
<svg style="left:29.5px;top:616.0px;" width="3" height="13" viewBox="0 0 3 13"><circle cx="1.500" cy="1.500" r="1.300" fill="#e8eef0"/><circle cx="1.500" cy="6.500" r="1.300" fill="#e8eef0"/><circle cx="1.500" cy="11.500" r="1.300" fill="#e8eef0"/></svg>
<span class="t" style="left:69.50px;top:614.00px;font-size:13.3px;line-height:17px;color:#f2f4f5;letter-spacing:-0.150px;transform:scaleX(0.8870);transform-origin:0 50%;">ETH/USD</span>
<span class="t" style="left:285.63px;top:614.00px;font-size:13.3px;line-height:17px;color:#f2f4f5;letter-spacing:-0.600px;">1.581,83</span>
<span class="t" style="left:375.03px;top:614.00px;font-size:13.3px;line-height:17px;color:#f2f4f5;letter-spacing:-0.600px;">1.577,09</span>
<span class="t" style="left:459.63px;top:614.00px;font-size:13.3px;line-height:17px;color:#f2f4f5;letter-spacing:-0.600px;">14:35:57</span>
<span class="t" style="left:585.63px;top:614.00px;font-size:13.3px;line-height:17px;color:#f2f4f5;letter-spacing:-0.600px;">1.577,09</span>
<span class="t" style="left:755.60px;top:613.50px;font-size:13.5px;line-height:18px;color:#f2f4f5;letter-spacing:-0.200px;">--</span>
<span class="t" style="left:820.24px;top:614.00px;font-size:13.3px;line-height:17px;color:#fb3a24;letter-spacing:-0.750px;">-62,16</span>
<div style="left:930px;top:652.5px;width:12px;height:12px;background:#0b5d5c;border-radius:1px;"></div>
<svg style="left:24px;top:688.5px;" width="21" height="21" viewBox="0 0 21 21"><circle cx="8.800" cy="8.800" r="7.200" stroke="#0d9fd8" stroke-width="2.300" fill="none"/><path d="M14 14L19.500 19.500" stroke="#0d9fd8" stroke-width="2.800" stroke-linecap="round"/></svg>
<span class="t" style="left:50.00px;top:691.50px;font-size:12.5px;line-height:16px;color:#8a949a;font-weight:700;letter-spacing:-0.150px;transform:scaleX(0.8687);transform-origin:0 50%;">CHART</span>
<span class="t" style="left:94.50px;top:691.50px;font-size:12.5px;line-height:16px;color:#f2f4f5;letter-spacing:-0.150px;transform:scaleX(0.9485);transform-origin:0 50%;">BTC/CHF SPOT RATE</span>
<div style="left:231px;top:687px;width:43px;height:22px;border:1px solid #0d9fd8;border-radius:2px;"></div>
<svg style="left:237px;top:691.5px;" width="16" height="15" viewBox="0 0 16 15"><path d="M8 .5L15.500 4.200V5.500H.5V4.200z" fill="#0d9fd8"/><path d="M2.500 6.500V11.500M5.500 6.500V11.500M8 6.500V11.500M10.500 6.500V11.500M13.500 6.500V11.500" stroke="#0d9fd8" stroke-width="1.500"/><path d="M1.200 12.200H14.800M.5 14H15.500" stroke="#0d9fd8" stroke-width="1.300"/></svg>
<svg style="left:259.0px;top:697.0px;" width="12.0" height="7.0" viewBox="0 0 12 7"><path d="M1 1L6 6L11 1" stroke="#0d9fd8" stroke-width="1.6" fill="none" stroke-linecap="round" stroke-linejoin="round"/></svg>
<svg style="left:871px;top:687.5px;" width="12" height="23" viewBox="0 0 12 23"><g stroke="#0d9fd8" stroke-width="2" fill="none" stroke-linecap="round" stroke-linejoin="round"><path d="M6 1V10M1.500 5.500L6 10l4.500-4.500"/><path d="M6 22V13M1.500 17.500L6 13l4.500 4.500"/></g></svg>
<svg style="left:894.8px;top:690px;" width="19" height="19" viewBox="0 0 19 19"><g stroke="#0d9fd8" stroke-width="2" fill="none"><path d="M1 7.500V1H7.500"/><path d="M18 11.500V18H11.500"/><path d="M8.500 10.500L2.500 16.500M10.500 8.500L16.500 2.500"/></g><path d="M11 .5H18.500V8z" fill="#0d9fd8"/><path d="M.5 11V18.500H8z" fill="#0d9fd8"/></svg>
<svg style="left:928px;top:690px;" width="6" height="18" viewBox="0 0 6 18"><circle cx="3" cy="2.800" r="2.100" fill="#0d9fd8"/><circle cx="3" cy="9" r="2.100" fill="#0d9fd8"/><circle cx="3" cy="15.200" r="2.100" fill="#0d9fd8"/></svg>
<div style="left:23px;top:722.5px;width:63px;height:21px;border:1px solid #0d9fd8;border-radius:2px;"></div>
<span class="t" style="left:29.50px;top:726.50px;font-size:12.5px;line-height:16px;color:#0d9fd8;font-weight:700;letter-spacing:-0.150px;transform:scaleX(0.9498);transform-origin:0 50%;">AUTO</span>
<svg style="left:70.0px;top:732.0px;" width="12.0" height="7.0" viewBox="0 0 12 7"><path d="M1 1L6 6L11 1" stroke="#0d9fd8" stroke-width="1.6" fill="none" stroke-linecap="round" stroke-linejoin="round"/></svg>
<div style="left:91px;top:722.5px;width:43px;height:21px;border:1px solid #0d9fd8;border-radius:2px;"></div>
<span class="t" style="left:97.50px;top:726.50px;font-size:12.5px;line-height:16px;color:#0d9fd8;font-weight:700;letter-spacing:-0.150px;transform:scaleX(0.9813);transform-origin:0 50%;">1J</span>
<svg style="left:118.5px;top:732.0px;" width="12.0" height="7.0" viewBox="0 0 12 7"><path d="M1 1L6 6L11 1" stroke="#0d9fd8" stroke-width="1.6" fill="none" stroke-linecap="round" stroke-linejoin="round"/></svg>
<div style="left:139px;top:722.5px;width:43px;height:21px;border:1px solid #0d9fd8;border-radius:2px;"></div>
<svg style="left:145px;top:727px;" width="17" height="13" viewBox="0 0 17 13"><path d="M.5 12.500V8.500L6 4l3.500 3.500L16 1V12.500z" fill="#0d9fd8"/></svg>
<svg style="left:167.0px;top:732.0px;" width="12.0" height="7.0" viewBox="0 0 12 7"><path d="M1 1L6 6L11 1" stroke="#0d9fd8" stroke-width="1.6" fill="none" stroke-linecap="round" stroke-linejoin="round"/></svg>
<div style="left:187px;top:722.5px;width:129px;height:21px;border:1px solid #0d9fd8;border-radius:2px;"></div>
<svg style="left:191.5px;top:726px;" width="15" height="16" viewBox="0 0 15 16"><g stroke="#0d9fd8" stroke-width="1" fill="none"><rect x=".8" y="2.500" width="13.400" height="12.700" rx="1"/><path d="M.8 6H14.200M.8 9H14.200M.8 12H14.200M4.200 6V15M7.500 6V15M10.800 6V15"/><path d="M4 .5V3.500M11 .5V3.500" stroke-width="1.400"/></g></svg>
<span class="t" style="left:213.00px;top:727.50px;font-size:11.5px;line-height:15px;color:#dfe6ea;font-style:italic;letter-spacing:-0.150px;transform:scaleX(0.9213);transform-origin:0 50%;">VON:</span>
<span class="t" style="left:264.23px;top:726.00px;font-size:13.3px;line-height:17px;color:#f2f4f5;letter-spacing:-0.500px;">29.01.22</span>
<div style="left:317px;top:722.5px;width:128px;height:21px;border:1px solid #0d9fd8;border-radius:2px;"></div>
<svg style="left:321.5px;top:726px;" width="15" height="16" viewBox="0 0 15 16"><g stroke="#0d9fd8" stroke-width="1" fill="none"><rect x=".8" y="2.500" width="13.400" height="12.700" rx="1"/><path d="M.8 6H14.200M.8 9H14.200M.8 12H14.200M4.200 6V15M7.500 6V15M10.800 6V15"/><path d="M4 .5V3.500M11 .5V3.500" stroke-width="1.400"/></g></svg>
<span class="t" style="left:343.00px;top:727.50px;font-size:11.5px;line-height:15px;color:#dfe6ea;font-style:italic;letter-spacing:-0.150px;transform:scaleX(0.9630);transform-origin:0 50%;">BIS:</span>
<span class="t" style="left:394.23px;top:726.00px;font-size:13.3px;line-height:17px;color:#f2f4f5;letter-spacing:-0.500px;">30.01.23</span>
<svg style="left:41px;top:763px;" width="12" height="12" viewBox="0 0 12 12"><circle cx="6" cy="6" r="6" fill="#0fa3dc"/></svg>
<span class="t" style="left:60.00px;top:762.70px;font-size:11.2px;line-height:15px;color:#e3e9ec;letter-spacing:-0.150px;transform:scaleX(0.9119);transform-origin:0 50%;">BTC/CHF SPOT RATE (CHF) (XRATE)</span>
<div style="left:254px;top:768.7px;width:15.5px;height:2px;background:#5fd45f;"></div>
<span class="t" style="left:274.50px;top:762.70px;font-size:11.2px;line-height:15px;color:#e3e9ec;letter-spacing:-0.150px;transform:scaleX(0.9245);transform-origin:0 50%;">GD (38)</span>
<svg style="left:15px;top:780px;" width="936" height="290" viewBox="0 0 936 290"><defs><linearGradient id="ag" x1="0" y1="0" x2="0" y2="1"><stop offset="0" stop-color="#056a8c" stop-opacity=".85"/><stop offset=".55" stop-color="#04465f" stop-opacity=".75"/><stop offset="1" stop-color="#022a3a" stop-opacity=".12"/></linearGradient></defs>
<polygon points="11.0,76.2 16.2,72.5 18.8,73.2 22.5,83.8 25.0,85.0 31.2,37.5 35.0,36.2 38.2,33.8 42.0,37.5 45.0,48.8 50.5,35.0 54.5,37.5 58.0,60.0 61.2,65.0 65.0,82.5 68.8,77.5 71.2,81.2 75.0,76.2 78.8,65.0 82.0,41.2 87.5,37.5 91.2,50.0 94.2,73.8 97.5,75.0 100.5,71.2 104.5,51.2 107.5,66.2 111.2,67.5 115.0,60.0 120.0,52.5 123.8,53.8 127.5,50.0 130.5,52.5 134.5,45.0 137.5,45.0 141.2,35.0 143.8,32.5 147.0,10.5 151.2,13.8 156.8,26.2 163.0,19.5 166.2,22.5 170.0,35.0 177.0,42.5 180.0,65.0 183.0,62.5 186.2,52.5 190.0,59.5 197.5,52.5 201.2,47.0 205.0,48.8 209.2,57.0 212.5,53.0 216.2,63.8 222.5,52.0 226.2,60.0 231.2,58.8 235.0,63.0 239.2,51.8 242.5,70.0 245.8,73.8 248.8,103.8 252.5,112.5 255.8,124.5 259.2,125.0 262.5,112.5 268.8,111.5 272.0,121.2 275.5,117.5 280.0,125.0 283.8,125.5 288.8,123.2 292.5,126.2 295.5,131.2 298.8,111.2 302.0,110.0 305.0,123.8 308.8,121.2 312.0,123.2 315.0,109.5 318.8,110.0 322.0,116.2 325.0,117.0 328.8,122.5 331.2,160.0 334.5,173.8 338.0,169.5 341.2,183.8 347.5,186.2 350.5,183.8 354.5,190.8 360.0,182.0 367.5,188.2 371.2,189.2 374.2,198.8 385.0,186.2 387.5,186.2 391.2,176.2 394.2,175.0 397.5,186.2 400.5,191.2 407.5,183.8 411.2,181.2 416.2,165.0 420.0,162.5 425.0,168.8 430.0,175.0 433.8,183.2 440.0,164.5 446.2,165.8 450.0,171.2 456.2,167.5 460.0,173.8 465.0,166.2 467.5,165.0 470.0,168.8 473.8,165.8 485.0,164.5 488.8,168.0 493.0,167.5 496.2,182.5 500.0,182.0 506.2,177.5 509.5,178.8 515.0,187.5 518.8,185.0 523.0,188.8 528.8,187.5 536.2,191.2 542.5,194.2 546.2,178.8 548.8,175.5 552.0,189.2 555.0,188.2 560.0,191.8 564.5,191.8 568.8,195.5 572.5,200.0 576.2,193.2 580.0,193.8 583.8,191.2 587.5,192.0 595.0,190.0 602.0,185.5 608.8,187.5 618.8,192.0 625.0,189.2 631.2,189.0 640.0,190.8 647.5,189.2 651.2,183.0 654.2,181.2 657.5,183.0 661.2,180.8 671.2,181.0 675.0,183.2 680.5,176.2 683.8,181.2 685.5,187.5 688.2,205.0 690.5,216.2 693.8,205.0 697.5,213.8 700.5,217.0 703.8,213.8 706.2,216.2 709.5,213.8 713.8,213.8 717.0,219.5 722.5,217.0 727.5,215.5 733.8,217.0 740.0,211.8 743.8,213.8 747.5,213.0 756.2,213.8 760.0,212.0 765.0,212.5 770.0,209.2 773.8,210.0 778.8,214.5 783.0,218.8 787.5,215.8 792.5,215.8 798.8,215.0 806.2,217.5 816.2,217.5 825.0,215.0 835.0,213.8 842.0,210.0 847.5,197.5 852.0,187.5 855.5,187.5 858.8,191.2 862.0,190.0 865.0,178.8 868.0,176.2 871.2,177.5 875.0,175.8 885.0,175.5 885,256.5 11,256.5" fill="url(#ag)"/>
<g stroke="#8f9da3" stroke-width="1"><path d="M11 42.5H885"/><path d="M11 114.5H885"/><path d="M11 185.5H885"/></g>
<polyline points="11.0,76.2 16.2,72.5 18.8,73.2 22.5,83.8 25.0,85.0 31.2,37.5 35.0,36.2 38.2,33.8 42.0,37.5 45.0,48.8 50.5,35.0 54.5,37.5 58.0,60.0 61.2,65.0 65.0,82.5 68.8,77.5 71.2,81.2 75.0,76.2 78.8,65.0 82.0,41.2 87.5,37.5 91.2,50.0 94.2,73.8 97.5,75.0 100.5,71.2 104.5,51.2 107.5,66.2 111.2,67.5 115.0,60.0 120.0,52.5 123.8,53.8 127.5,50.0 130.5,52.5 134.5,45.0 137.5,45.0 141.2,35.0 143.8,32.5 147.0,10.5 151.2,13.8 156.8,26.2 163.0,19.5 166.2,22.5 170.0,35.0 177.0,42.5 180.0,65.0 183.0,62.5 186.2,52.5 190.0,59.5 197.5,52.5 201.2,47.0 205.0,48.8 209.2,57.0 212.5,53.0 216.2,63.8 222.5,52.0 226.2,60.0 231.2,58.8 235.0,63.0 239.2,51.8 242.5,70.0 245.8,73.8 248.8,103.8 252.5,112.5 255.8,124.5 259.2,125.0 262.5,112.5 268.8,111.5 272.0,121.2 275.5,117.5 280.0,125.0 283.8,125.5 288.8,123.2 292.5,126.2 295.5,131.2 298.8,111.2 302.0,110.0 305.0,123.8 308.8,121.2 312.0,123.2 315.0,109.5 318.8,110.0 322.0,116.2 325.0,117.0 328.8,122.5 331.2,160.0 334.5,173.8 338.0,169.5 341.2,183.8 347.5,186.2 350.5,183.8 354.5,190.8 360.0,182.0 367.5,188.2 371.2,189.2 374.2,198.8 385.0,186.2 387.5,186.2 391.2,176.2 394.2,175.0 397.5,186.2 400.5,191.2 407.5,183.8 411.2,181.2 416.2,165.0 420.0,162.5 425.0,168.8 430.0,175.0 433.8,183.2 440.0,164.5 446.2,165.8 450.0,171.2 456.2,167.5 460.0,173.8 465.0,166.2 467.5,165.0 470.0,168.8 473.8,165.8 485.0,164.5 488.8,168.0 493.0,167.5 496.2,182.5 500.0,182.0 506.2,177.5 509.5,178.8 515.0,187.5 518.8,185.0 523.0,188.8 528.8,187.5 536.2,191.2 542.5,194.2 546.2,178.8 548.8,175.5 552.0,189.2 555.0,188.2 560.0,191.8 564.5,191.8 568.8,195.5 572.5,200.0 576.2,193.2 580.0,193.8 583.8,191.2 587.5,192.0 595.0,190.0 602.0,185.5 608.8,187.5 618.8,192.0 625.0,189.2 631.2,189.0 640.0,190.8 647.5,189.2 651.2,183.0 654.2,181.2 657.5,183.0 661.2,180.8 671.2,181.0 675.0,183.2 680.5,176.2 683.8,181.2 685.5,187.5 688.2,205.0 690.5,216.2 693.8,205.0 697.5,213.8 700.5,217.0 703.8,213.8 706.2,216.2 709.5,213.8 713.8,213.8 717.0,219.5 722.5,217.0 727.5,215.5 733.8,217.0 740.0,211.8 743.8,213.8 747.5,213.0 756.2,213.8 760.0,212.0 765.0,212.5 770.0,209.2 773.8,210.0 778.8,214.5 783.0,218.8 787.5,215.8 792.5,215.8 798.8,215.0 806.2,217.5 816.2,217.5 825.0,215.0 835.0,213.8 842.0,210.0 847.5,197.5 852.0,187.5 855.5,187.5 858.8,191.2 862.0,190.0 865.0,178.8 868.0,176.2 871.2,177.5 875.0,175.8 885.0,175.5" stroke="#10a5de" stroke-width="1.700" fill="none" stroke-linejoin="round"/>
<polyline points="11.0,35.8 17.5,38.2 30.0,44.5 42.5,47.0 57.5,52.5 77.5,60.8 90.0,60.0 102.5,62.5 115.0,63.2 127.5,60.0 142.5,55.8 152.5,51.2 165.0,49.5 180.0,49.5 192.5,48.0 202.5,46.2 215.0,47.5 227.5,46.2 240.0,46.2 247.5,47.5 260.0,53.8 272.5,61.2 285.0,72.5 297.5,82.5 307.5,88.2 320.0,93.8 330.0,98.8 345.0,113.8 360.0,130.0 372.5,141.2 385.0,148.2 397.5,155.0 410.0,161.2 422.5,165.8 435.0,171.2 447.5,176.2 457.5,179.5 465.0,180.0 477.5,177.5 492.5,175.0 510.0,173.8 530.0,174.2 547.5,175.8 565.0,178.2 580.0,181.2 600.0,185.0 620.0,188.2 640.0,190.0 655.0,189.5 672.5,188.8 685.0,188.8 702.5,190.8 720.0,193.8 740.0,198.2 760.0,202.0 775.0,204.5 790.0,208.8 807.5,213.8 820.0,215.0 832.5,215.0 845.0,214.5 860.0,211.2 872.5,207.5 885.0,203.8" stroke="#5fd45f" stroke-width="1.800" fill="none" stroke-linejoin="round"/>
<path d="M11 256.29999999999995H885" stroke="#e9eef0" stroke-width="1.400"/>
<path d="M18 256.29999999999995V265.5" stroke="#e9eef0" stroke-width="1.200"/><path d="M83.8 256.29999999999995V265.5" stroke="#e9eef0" stroke-width="1.200"/><path d="M159.5 256.29999999999995V265.5" stroke="#e9eef0" stroke-width="1.200"/><path d="M230.5 256.29999999999995V265.5" stroke="#e9eef0" stroke-width="1.200"/><path d="M304.5 256.29999999999995V265.5" stroke="#e9eef0" stroke-width="1.200"/><path d="M377.5 256.29999999999995V265.5" stroke="#e9eef0" stroke-width="1.200"/><path d="M449 256.29999999999995V265.5" stroke="#e9eef0" stroke-width="1.200"/><path d="M525.5 256.29999999999995V265.5" stroke="#e9eef0" stroke-width="1.200"/><path d="M595.5 256.29999999999995V265.5" stroke="#e9eef0" stroke-width="1.200"/><path d="M670.5 256.29999999999995V265.5" stroke="#e9eef0" stroke-width="1.200"/><path d="M742.5 256.29999999999995V265.5" stroke="#e9eef0" stroke-width="1.200"/><path d="M816 256.29999999999995V265.5" stroke="#e9eef0" stroke-width="1.200"/><circle cx="885" cy="175.5" r="2" fill="#6fe36f"/></svg>
<span class="t" style="left:16.00px;top:1045.30px;font-size:13.3px;line-height:17px;color:#eef2f4;letter-spacing:-0.150px;transform:scaleX(0.9369);transform-origin:0 50%;">Feb. 2022</span>
<span class="t" style="left:72.00px;top:1045.30px;font-size:13.3px;line-height:17px;color:#eef2f4;letter-spacing:-0.150px;transform:scaleX(0.9490);transform-origin:0 50%;">Mär. 2022</span>
<span class="t" style="left:148.53px;top:1045.30px;font-size:13.3px;line-height:17px;color:#eef2f4;letter-spacing:-0.500px;">Apr. 2022</span>
<span class="t" style="left:220.39px;top:1045.30px;font-size:13.3px;line-height:17px;color:#eef2f4;letter-spacing:-0.500px;">Mai 2022</span>
<span class="t" style="left:292.79px;top:1045.30px;font-size:13.3px;line-height:17px;color:#eef2f4;letter-spacing:-0.500px;">Jun. 2022</span>
<span class="t" style="left:368.01px;top:1045.30px;font-size:13.3px;line-height:17px;color:#eef2f4;letter-spacing:-0.500px;">Jul. 2022</span>
<span class="t" style="left:436.18px;top:1045.30px;font-size:13.3px;line-height:17px;color:#eef2f4;letter-spacing:-0.500px;">Aug. 2022</span>
<span class="t" style="left:512.68px;top:1045.30px;font-size:13.3px;line-height:17px;color:#eef2f4;letter-spacing:-0.500px;">Sep. 2022</span>
<span class="t" style="left:584.17px;top:1045.30px;font-size:13.3px;line-height:17px;color:#eef2f4;letter-spacing:-0.500px;">Okt. 2022</span>
<span class="t" style="left:658.18px;top:1045.30px;font-size:13.3px;line-height:17px;color:#eef2f4;letter-spacing:-0.500px;">Nov. 2022</span>
<span class="t" style="left:729.69px;top:1045.30px;font-size:13.3px;line-height:17px;color:#eef2f4;letter-spacing:-0.500px;">Dez. 2022</span>
<span class="t" style="left:804.29px;top:1045.30px;font-size:13.3px;line-height:17px;color:#eef2f4;letter-spacing:-0.500px;">Jan. 2023</span>
<span class="t" style="left:860.00px;top:805.50px;font-size:11.2px;line-height:15px;color:#eef2f4;letter-spacing:-0.019px;">40k</span>
<span class="t" style="left:860.00px;top:877.50px;font-size:11.2px;line-height:15px;color:#eef2f4;letter-spacing:-0.019px;">30k</span>
<span class="t" style="left:860.00px;top:948.50px;font-size:11.2px;line-height:15px;color:#eef2f4;letter-spacing:-0.019px;">20k</span>
<span class="t" style="left:860.00px;top:1019.50px;font-size:11.2px;line-height:15px;color:#eef2f4;letter-spacing:-0.019px;">10k</span>
<svg style="left:901px;top:947.5px;" width="49" height="16.5" viewBox="0 0 49 16.5"><path d="M0 8.200L7 0H49V16.500H7z" fill="#10a5de"/></svg>
<span class="t" style="left:909.00px;top:948.80px;font-size:10.8px;line-height:14px;color:#03202c;letter-spacing:-0.150px;transform:scaleX(0.8632);transform-origin:0 50%;">21287,23</span>
<svg style="left:901px;top:975.7px;" width="49" height="16.5" viewBox="0 0 49 16.5"><path d="M0 8.200L7 0H49V16.500H7z" fill="#5fd45f"/></svg>
<span class="t" style="left:909.00px;top:977.00px;font-size:10.8px;line-height:14px;color:#03202c;letter-spacing:-0.150px;transform:scaleX(0.8632);transform-origin:0 50%;">17251,63</span>
<span class="t" style="left:23.00px;top:1077.50px;font-size:11.5px;line-height:15px;color:#6d7b83;letter-spacing:-0.150px;transform:scaleX(0.9842);transform-origin:0 50%;">Echtzeit | Aktualisiert: 30.01.2023, 14:35:03</span>
<div style="left:931px;top:1078px;width:12px;height:12px;background:#0b5d5c;border-radius:1px;"></div>
<span class="t" style="left:969.00px;top:691.50px;font-size:12.5px;line-height:16px;color:#aab3b8;font-weight:700;letter-spacing:-0.150px;transform:scaleX(0.9010);transform-origin:0 50%;">VWD-SEITEN</span>
<div style="left:1045px;top:687px;width:95px;height:22px;border:1px solid #0d9fd8;border-radius:2px;"></div>
<span class="t" style="left:1052.00px;top:691.50px;font-size:12.5px;line-height:16px;color:#0d9fd8;letter-spacing:-0.150px;transform:scaleX(0.9458);transform-origin:0 50%;">FAVORITEN</span>
<svg style="left:1124.0px;top:697.0px;" width="12.0" height="7.0" viewBox="0 0 12 7"><path d="M1 1L6 6L11 1" stroke="#0d9fd8" stroke-width="1.6" fill="none" stroke-linecap="round" stroke-linejoin="round"/></svg>
<svg style="left:1817px;top:687.5px;" width="12" height="23" viewBox="0 0 12 23"><g stroke="#0d9fd8" stroke-width="2" fill="none" stroke-linecap="round" stroke-linejoin="round"><path d="M6 1V10M1.500 5.500L6 10l4.500-4.500"/><path d="M6 22V13M1.500 17.500L6 13l4.500 4.500"/></g></svg>
<svg style="left:1840.8px;top:690px;" width="19" height="19" viewBox="0 0 19 19"><g stroke="#0d9fd8" stroke-width="2" fill="none"><path d="M1 7.500V1H7.500"/><path d="M18 11.500V18H11.500"/><path d="M8.500 10.500L2.500 16.500M10.500 8.500L16.500 2.500"/></g><path d="M11 .5H18.500V8z" fill="#0d9fd8"/><path d="M.5 11V18.500H8z" fill="#0d9fd8"/></svg>
<svg style="left:1874px;top:690px;" width="6" height="18" viewBox="0 0 6 18"><circle cx="3" cy="2.800" r="2.100" fill="#0d9fd8"/><circle cx="3" cy="9" r="2.100" fill="#0d9fd8"/><circle cx="3" cy="15.200" r="2.100" fill="#0d9fd8"/></svg>
<svg style="left:973px;top:725px;" width="18" height="18" viewBox="0 0 18 18"><path d="M9 1.500L2.500 9L9 16.500" stroke="#0d9fd8" stroke-width="2" fill="none" stroke-linecap="round" stroke-linejoin="round"/></svg>
<div style="left:996px;top:722.5px;width:170px;height:21px;border:1px solid #0d9fd8;border-radius:2px;"></div>
<span class="t m" style="left:1003.00px;top:726.00px;font-size:12.6px;line-height:16px;color:#e8eef0;">205</span>
<svg style="left:1181px;top:725px;" width="18" height="18" viewBox="0 0 18 18"><path d="M3 1.500L9.500 9L3 16.500" stroke="#0d9fd8" stroke-width="2" fill="none" stroke-linecap="round" stroke-linejoin="round"/></svg>
<svg style="left:1201px;top:725.5px;" width="18" height="18" viewBox="0 0 18 18"><path d="M1.500 4L9 11L16.500 4" stroke="#0d9fd8" stroke-width="2" fill="none" stroke-linecap="round" stroke-linejoin="round"/></svg>
<svg style="left:1228px;top:725px;" width="18" height="18" viewBox="0 0 18 18"><path d="M1.500 12L9 5L16.500 12" stroke="#0d9fd8" stroke-width="2" fill="none" stroke-linecap="round" stroke-linejoin="round"/></svg>
<svg style="left:1253.5px;top:723.5px;" width="21" height="21" viewBox="0 0 21 21"><path d="M10.500 1.500l2.700 5.900 6.300.7-4.700 4.300 1.300 6.300-5.600-3.200-5.600 3.200 1.300-6.300L1.500 8.100l6.300-.7z" stroke="#0d9fd8" stroke-width="1.700" fill="none" stroke-linejoin="round"/></svg>
<div style="left:1699px;top:722.5px;width:188px;height:21px;border:1px solid #0d9fd8;border-radius:2px;"></div>
<svg style="left:1704px;top:726px;" width="17" height="17" viewBox="0 0 17 17"><circle cx="7" cy="7" r="5.300" stroke="#0d9fd8" stroke-width="1.700" fill="none"/><path d="M11 11L15.500 15.500" stroke="#0d9fd8" stroke-width="2" stroke-linecap="round"/></svg>
<span class="t" style="left:1722.00px;top:727.00px;font-size:12.5px;line-height:16px;color:#4d5e68;letter-spacing:-0.150px;transform:scaleX(0.9599);transform-origin:0 50%;">SUCHE...</span>
<div style="left:963px;top:761px;width:925px;height:262px;overflow:hidden;">
<div style="left:170px;top:0;width:91px;height:260.5px;background:#2a3b43;"></div>
<div style="left:269px;top:0;width:91px;height:260.5px;background:#2a3b43;"></div>
<div style="left:594px;top:0;width:91px;height:260.5px;background:#2a3b43;"></div>
<div style="left:693px;top:0;width:90px;height:260.5px;background:#2a3b43;"></div>
<span class="t m" style="left:11.50px;top:-7.00px;font-size:12.6px;line-height:18px;color:#eef1f2;">BCH/CHF Spot rate Bi</span>
<span class="t m" style="left:170.26px;top:-7.00px;font-size:12.6px;line-height:18px;color:#2a9be0;">   121,66000</span>
<span class="t m" style="left:268.54px;top:-7.00px;font-size:12.6px;line-height:18px;color:#2a9be0;">   121,78000</span>
<span class="t m" style="left:366.82px;top:-7.00px;font-size:12.6px;line-height:18px;color:#eef1f2;">14:35</span>
<span class="t m" style="left:434.86px;top:-7.00px;font-size:12.6px;line-height:18px;color:#eef1f2;">LINK/CHF Spot rate C</span>
<span class="t m" style="left:593.62px;top:-7.00px;font-size:12.6px;line-height:18px;color:#2a9be0;">     6,45029</span>
<span class="t m" style="left:691.90px;top:-7.00px;font-size:12.6px;line-height:18px;color:#2a9be0;">     6,48911</span>
<span class="t m" style="left:790.18px;top:-7.00px;font-size:12.6px;line-height:18px;color:#eef1f2;">14:35</span>
<span class="t m" style="left:11.50px;top:11.00px;font-size:12.6px;line-height:18px;color:#eef1f2;">BCH/EUR Spot rate Bi</span>
<span class="t m" style="left:170.26px;top:11.00px;font-size:12.6px;line-height:18px;color:#2a9be0;">   120,81000</span>
<span class="t m" style="left:268.54px;top:11.00px;font-size:12.6px;line-height:18px;color:#2a9be0;">   121,05000</span>
<span class="t m" style="left:366.82px;top:11.00px;font-size:12.6px;line-height:18px;color:#eef1f2;">14:35</span>
<span class="t m" style="left:434.86px;top:11.00px;font-size:12.6px;line-height:18px;color:#eef1f2;">LINK/EUR Spot rate C</span>
<span class="t m" style="left:593.62px;top:11.00px;font-size:12.6px;line-height:18px;color:#3fe05a;">     6,43273</span>
<span class="t m" style="left:691.90px;top:11.00px;font-size:12.6px;line-height:18px;color:#3fe05a;">     6,45851</span>
<span class="t m" style="left:790.18px;top:11.00px;font-size:12.6px;line-height:18px;color:#eef1f2;">14:35</span>
<span class="t m" style="left:11.50px;top:29.00px;font-size:12.6px;line-height:18px;color:#eef1f2;">BCH/USD Spot rate Bi</span>
<span class="t m" style="left:170.26px;top:29.00px;font-size:12.6px;line-height:18px;color:#2a9be0;">   131,42000</span>
<span class="t m" style="left:268.54px;top:29.00px;font-size:12.6px;line-height:18px;color:#2a9be0;">   132,08000</span>
<span class="t m" style="left:366.82px;top:29.00px;font-size:12.6px;line-height:18px;color:#eef1f2;">14:35</span>
<span class="t m" style="left:434.86px;top:29.00px;font-size:12.6px;line-height:18px;color:#eef1f2;">LINK/USD Spot rate C</span>
<span class="t m" style="left:593.62px;top:29.00px;font-size:12.6px;line-height:18px;color:#2a9be0;">     7,00596</span>
<span class="t m" style="left:691.90px;top:29.00px;font-size:12.6px;line-height:18px;color:#2a9be0;">     7,03404</span>
<span class="t m" style="left:790.18px;top:29.00px;font-size:12.6px;line-height:18px;color:#eef1f2;">14:35</span>
<span class="t m" style="left:11.50px;top:47.00px;font-size:12.6px;line-height:18px;color:#eef1f2;">BTC/CHF Spot rate Bi</span>
<span class="t m" style="left:170.26px;top:47.00px;font-size:12.6px;line-height:18px;color:#3fe05a;"> 21260,79000</span>
<span class="t m" style="left:268.54px;top:47.00px;font-size:12.6px;line-height:18px;color:#3fe05a;"> 21303,35000</span>
<span class="t m" style="left:366.82px;top:47.00px;font-size:12.6px;line-height:18px;color:#eef1f2;">14:35</span>
<span class="t m" style="left:434.86px;top:47.00px;font-size:12.6px;line-height:18px;color:#eef1f2;">LTC/CHF Spot rate Li</span>
<span class="t m" style="left:593.62px;top:47.00px;font-size:12.6px;line-height:18px;color:#e0414b;">    85,22000</span>
<span class="t m" style="left:691.90px;top:47.00px;font-size:12.6px;line-height:18px;color:#e0414b;">    85,42400</span>
<span class="t m" style="left:790.18px;top:47.00px;font-size:12.6px;line-height:18px;color:#eef1f2;">14:35</span>
<span class="t m" style="left:11.50px;top:65.00px;font-size:12.6px;line-height:18px;color:#eef1f2;">BTC/EUR Spot rate Bi</span>
<span class="t m" style="left:170.26px;top:65.00px;font-size:12.6px;line-height:18px;color:#3fe05a;"> 21176,04000</span>
<span class="t m" style="left:268.54px;top:65.00px;font-size:12.6px;line-height:18px;color:#3fe05a;"> 21218,44000</span>
<span class="t m" style="left:366.82px;top:65.00px;font-size:12.6px;line-height:18px;color:#eef1f2;">14:35</span>
<span class="t m" style="left:434.86px;top:65.00px;font-size:12.6px;line-height:18px;color:#eef1f2;">LTC/EUR Spot rate Li</span>
<span class="t m" style="left:593.62px;top:65.00px;font-size:12.6px;line-height:18px;color:#e0414b;">    84,85300</span>
<span class="t m" style="left:691.90px;top:65.00px;font-size:12.6px;line-height:18px;color:#e0414b;">    85,10700</span>
<span class="t m" style="left:790.18px;top:65.00px;font-size:12.6px;line-height:18px;color:#eef1f2;">14:35</span>
<span class="t m" style="left:11.50px;top:83.00px;font-size:12.6px;line-height:18px;color:#eef1f2;">BTC/GBP Spot rate Bi</span>
<span class="t m" style="left:170.26px;top:83.00px;font-size:12.6px;line-height:18px;color:#3fe05a;"> 18630,85000</span>
<span class="t m" style="left:268.54px;top:83.00px;font-size:12.6px;line-height:18px;color:#3fe05a;"> 18668,15000</span>
<span class="t m" style="left:366.82px;top:83.00px;font-size:12.6px;line-height:18px;color:#eef1f2;">14:35</span>
<span class="t m" style="left:434.86px;top:83.00px;font-size:12.6px;line-height:18px;color:#eef1f2;">LTC/USD Spot rate Li</span>
<span class="t m" style="left:593.62px;top:83.00px;font-size:12.6px;line-height:18px;color:#e0414b;">    92,46200</span>
<span class="t m" style="left:691.90px;top:83.00px;font-size:12.6px;line-height:18px;color:#e0414b;">    92,68400</span>
<span class="t m" style="left:790.18px;top:83.00px;font-size:12.6px;line-height:18px;color:#eef1f2;">14:35</span>
<span class="t m" style="left:11.50px;top:101.00px;font-size:12.6px;line-height:18px;color:#eef1f2;">BTC/USD Spot rate Bi</span>
<span class="t m" style="left:170.26px;top:101.00px;font-size:12.6px;line-height:18px;color:#e0414b;"> 23078,26000</span>
<span class="t m" style="left:268.54px;top:101.00px;font-size:12.6px;line-height:18px;color:#e0414b;"> 23101,34000</span>
<span class="t m" style="left:366.82px;top:101.00px;font-size:12.6px;line-height:18px;color:#eef1f2;">14:35</span>
<span class="t m" style="left:434.86px;top:101.00px;font-size:12.6px;line-height:18px;color:#eef1f2;">SUSHI/USD Spot rate </span>
<span class="t m" style="left:593.62px;top:101.00px;font-size:12.6px;line-height:18px;color:#3fe05a;">     1,26120</span>
<span class="t m" style="left:691.90px;top:101.00px;font-size:12.6px;line-height:18px;color:#3fe05a;">     1,26879</span>
<span class="t m" style="left:790.18px;top:101.00px;font-size:12.6px;line-height:18px;color:#eef1f2;">14:32</span>
<span class="t m" style="left:11.50px;top:119.00px;font-size:12.6px;line-height:18px;color:#eef1f2;">BTC/USDC Spot rate B</span>
<span class="t m" style="left:170.26px;top:119.00px;font-size:12.6px;line-height:18px;color:#3fe05a;"> 23068,41000</span>
<span class="t m" style="left:268.54px;top:119.00px;font-size:12.6px;line-height:18px;color:#3fe05a;"> 23114,59000</span>
<span class="t m" style="left:366.82px;top:119.00px;font-size:12.6px;line-height:18px;color:#eef1f2;">14:35</span>
<span class="t m" style="left:434.86px;top:119.00px;font-size:12.6px;line-height:18px;color:#eef1f2;">UNI/USD Spot rate Un</span>
<span class="t m" style="left:593.62px;top:119.00px;font-size:12.6px;line-height:18px;color:#e0414b;">     6,59615</span>
<span class="t m" style="left:691.90px;top:119.00px;font-size:12.6px;line-height:18px;color:#e0414b;">     6,63585</span>
<span class="t m" style="left:790.18px;top:119.00px;font-size:12.6px;line-height:18px;color:#eef1f2;">14:35</span>
<span class="t m" style="left:11.50px;top:137.00px;font-size:12.6px;line-height:18px;color:#eef1f2;">BTC/USDT Spot rate B</span>
<span class="t m" style="left:170.26px;top:137.00px;font-size:12.6px;line-height:18px;color:#3fe05a;"> 23071,03000</span>
<span class="t m" style="left:268.54px;top:137.00px;font-size:12.6px;line-height:18px;color:#3fe05a;"> 23107,97000</span>
<span class="t m" style="left:366.82px;top:137.00px;font-size:12.6px;line-height:18px;color:#eef1f2;">14:35</span>
<span class="t m" style="left:434.86px;top:137.00px;font-size:12.6px;line-height:18px;color:#eef1f2;">USDC/USD Spot rate U</span>
<span class="t m" style="left:593.62px;top:137.00px;font-size:12.6px;line-height:18px;color:#2a9be0;">     0,99960</span>
<span class="t m" style="left:691.90px;top:137.00px;font-size:12.6px;line-height:18px;color:#2a9be0;">     1,00020</span>
<span class="t m" style="left:790.18px;top:137.00px;font-size:12.6px;line-height:18px;color:#eef1f2;">14:35</span>
<span class="t m" style="left:11.50px;top:155.00px;font-size:12.6px;line-height:18px;color:#eef1f2;">COMP/USD Spot rate C</span>
<span class="t m" style="left:170.26px;top:155.00px;font-size:12.6px;line-height:18px;color:#3fe05a;">    53,19815</span>
<span class="t m" style="left:268.54px;top:155.00px;font-size:12.6px;line-height:18px;color:#3fe05a;">    53,57185</span>
<span class="t m" style="left:366.82px;top:155.00px;font-size:12.6px;line-height:18px;color:#eef1f2;">14:35</span>
<span class="t m" style="left:434.86px;top:155.00px;font-size:12.6px;line-height:18px;color:#eef1f2;">USDT/USD Spot rate T</span>
<span class="t m" style="left:593.62px;top:155.00px;font-size:12.6px;line-height:18px;color:#2a9be0;">     0,99710</span>
<span class="t m" style="left:691.90px;top:155.00px;font-size:12.6px;line-height:18px;color:#2a9be0;">     1,00110</span>
<span class="t m" style="left:790.18px;top:155.00px;font-size:12.6px;line-height:18px;color:#eef1f2;">14:35</span>
<span class="t m" style="left:11.50px;top:173.00px;font-size:12.6px;line-height:18px;color:#eef1f2;">ETH/CHF Spot rate Et</span>
<span class="t m" style="left:170.26px;top:173.00px;font-size:12.6px;line-height:18px;color:#2a9be0;">  1453,55000</span>
<span class="t m" style="left:268.54px;top:173.00px;font-size:12.6px;line-height:18px;color:#2a9be0;">  1457,91000</span>
<span class="t m" style="left:366.82px;top:173.00px;font-size:12.6px;line-height:18px;color:#eef1f2;">14:35</span>
<span class="t m" style="left:434.86px;top:173.00px;font-size:12.6px;line-height:18px;color:#eef1f2;">XLM/USD Spot rate St</span>
<span class="t m" style="left:593.62px;top:173.00px;font-size:12.6px;line-height:18px;color:#3fe05a;">     0,09107</span>
<span class="t m" style="left:691.90px;top:173.00px;font-size:12.6px;line-height:18px;color:#2a9be0;">     0,09161</span>
<span class="t m" style="left:790.18px;top:173.00px;font-size:12.6px;line-height:18px;color:#eef1f2;">14:35</span>
<span class="t m" style="left:11.50px;top:191.00px;font-size:12.6px;line-height:18px;color:#eef1f2;">ETH/EUR Spot rate Et</span>
<span class="t m" style="left:170.26px;top:191.00px;font-size:12.6px;line-height:18px;color:#3fe05a;">  1447,65000</span>
<span class="t m" style="left:268.54px;top:191.00px;font-size:12.6px;line-height:18px;color:#3fe05a;">  1451,99000</span>
<span class="t m" style="left:366.82px;top:191.00px;font-size:12.6px;line-height:18px;color:#eef1f2;">14:35</span>
<span class="t m" style="left:434.86px;top:191.00px;font-size:12.6px;line-height:18px;color:#eef1f2;">XRP/CHF Spot rate Ri</span>
<span class="t m" style="left:593.62px;top:191.00px;font-size:12.6px;line-height:18px;color:#3fe05a;">     0,36740</span>
<span class="t m" style="left:691.90px;top:191.00px;font-size:12.6px;line-height:18px;color:#3fe05a;">     0,36998</span>
<span class="t m" style="left:790.18px;top:191.00px;font-size:12.6px;line-height:18px;color:#eef1f2;">14:35</span>
<span class="t m" style="left:11.50px;top:209.00px;font-size:12.6px;line-height:18px;color:#eef1f2;">ETH/GBP Spot rate Et</span>
<span class="t m" style="left:170.26px;top:209.00px;font-size:12.6px;line-height:18px;color:#3fe05a;">  1273,69000</span>
<span class="t m" style="left:268.54px;top:209.00px;font-size:12.6px;line-height:18px;color:#3fe05a;">  1277,51000</span>
<span class="t m" style="left:366.82px;top:209.00px;font-size:12.6px;line-height:18px;color:#eef1f2;">14:35</span>
<span class="t m" style="left:434.86px;top:209.00px;font-size:12.6px;line-height:18px;color:#eef1f2;">XRP/EUR Spot rate Ri</span>
<span class="t m" style="left:593.62px;top:209.00px;font-size:12.6px;line-height:18px;color:#3fe05a;">     0,36629</span>
<span class="t m" style="left:691.90px;top:209.00px;font-size:12.6px;line-height:18px;color:#3fe05a;">     0,36813</span>
<span class="t m" style="left:790.18px;top:209.00px;font-size:12.6px;line-height:18px;color:#eef1f2;">14:35</span>
<span class="t m" style="left:11.50px;top:227.00px;font-size:12.6px;line-height:18px;color:#eef1f2;">ETH/USD Spot rate Et</span>
<span class="t m" style="left:170.26px;top:227.00px;font-size:12.6px;line-height:18px;color:#e0414b;">  1577,09000</span>
<span class="t m" style="left:268.54px;top:227.00px;font-size:12.6px;line-height:18px;color:#e0414b;">  1581,83000</span>
<span class="t m" style="left:366.82px;top:227.00px;font-size:12.6px;line-height:18px;color:#eef1f2;">14:35</span>
<span class="t m" style="left:434.86px;top:227.00px;font-size:12.6px;line-height:18px;color:#eef1f2;">XRP/USD Spot rate Ri</span>
<span class="t m" style="left:593.62px;top:227.00px;font-size:12.6px;line-height:18px;color:#3fe05a;">     0,39877</span>
<span class="t m" style="left:691.90px;top:227.00px;font-size:12.6px;line-height:18px;color:#3fe05a;">     0,40157</span>
<span class="t m" style="left:790.18px;top:227.00px;font-size:12.6px;line-height:18px;color:#eef1f2;">14:35</span>
<span class="t m" style="left:11.50px;top:245.00px;font-size:12.6px;line-height:18px;color:#eef1f2;">ETH/USDT Spot rate E</span>
<span class="t m" style="left:170.26px;top:245.00px;font-size:12.6px;line-height:18px;color:#e0414b;">  1576,83000</span>
<span class="t m" style="left:268.54px;top:245.00px;font-size:12.6px;line-height:18px;color:#e0414b;">  1581,57000</span>
<span class="t m" style="left:366.82px;top:245.00px;font-size:12.6px;line-height:18px;color:#eef1f2;">14:35</span>
<span class="t m" style="left:434.86px;top:245.00px;font-size:12.6px;line-height:18px;color:#eef1f2;">YFI/USD Spot rate Ye</span>
<span class="t m" style="left:593.62px;top:245.00px;font-size:12.6px;line-height:18px;color:#e0414b;">  7340,21450</span>
<span class="t m" style="left:691.90px;top:245.00px;font-size:12.6px;line-height:18px;color:#e0414b;">  7413,98550</span>
<span class="t m" style="left:790.18px;top:245.00px;font-size:12.6px;line-height:18px;color:#eef1f2;">14:35</span>
</div>
<div style="left:1888px;top:869px;width:8px;height:208.5px;background:#9b9b9b;"></div>
<span class="t" style="left:969.00px;top:1077.50px;font-size:11.5px;line-height:15px;color:#7b8991;letter-spacing:-0.150px;transform:scaleX(0.9531);transform-origin:0 50%;">30.01.2023 14:22:19</span>
<svg style="left:24px;top:1121px;" width="21" height="21" viewBox="0 0 21 21"><circle cx="8.800" cy="8.800" r="7.200" stroke="#0d9fd8" stroke-width="2.300" fill="none"/><path d="M14 14L19.500 19.500" stroke="#0d9fd8" stroke-width="2.800" stroke-linecap="round"/></svg>
<span class="t" style="left:50.00px;top:1123.80px;font-size:12.5px;line-height:16px;color:#8a949a;font-weight:700;letter-spacing:-0.150px;transform:scaleX(0.8615);transform-origin:0 50%;">ARBITRAGE</span>
<span class="t" style="left:120.00px;top:1123.80px;font-size:12.5px;line-height:16px;color:#f2f4f5;letter-spacing:-0.150px;transform:scaleX(0.9445);transform-origin:0 50%;">BTC/CHF SPOT RATE</span>
<svg style="left:1840.8px;top:1122.3px;" width="19" height="19" viewBox="0 0 19 19"><g stroke="#0d9fd8" stroke-width="2" fill="none"><path d="M1 7.500V1H7.500"/><path d="M18 11.500V18H11.500"/><path d="M8.500 10.500L2.500 16.500M10.500 8.500L16.500 2.500"/></g><path d="M11 .5H18.500V8z" fill="#0d9fd8"/><path d="M.5 11V18.500H8z" fill="#0d9fd8"/></svg>
<svg style="left:1874px;top:1122.3px;" width="6" height="18" viewBox="0 0 6 18"><circle cx="3" cy="2.800" r="2.100" fill="#0d9fd8"/><circle cx="3" cy="9" r="2.100" fill="#0d9fd8"/><circle cx="3" cy="15.200" r="2.100" fill="#0d9fd8"/></svg>
<span class="t" style="left:67.50px;top:1153.00px;font-size:12.5px;line-height:16px;color:#0d9fd8;font-weight:700;letter-spacing:-0.150px;transform:scaleX(0.7800);transform-origin:0 50%;">HANDELSPLATZ</span>
<svg style="left:263px;top:1153.5px;" width="8" height="6" viewBox="0 0 8 6"><path d="M4 .5L7.800 5.500H.2z" fill="#0d9fd8"/></svg>
<span class="t" style="left:281.50px;top:1153.00px;font-size:12.5px;line-height:16px;color:#0d9fd8;font-weight:700;letter-spacing:-0.150px;transform:scaleX(0.8422);transform-origin:0 50%;">WHG</span>
<svg style="left:385px;top:1153.5px;" width="8" height="6" viewBox="0 0 8 6"><path d="M4 .5L7.800 5.500H.2z" fill="#0d9fd8"/></svg>
<span class="t" style="left:402.50px;top:1153.00px;font-size:12.5px;line-height:16px;color:#0d9fd8;font-weight:700;letter-spacing:-0.150px;transform:scaleX(0.9195);transform-origin:0 50%;">ZEIT</span>
<svg style="left:549px;top:1153.5px;" width="8" height="6" viewBox="0 0 8 6"><path d="M4 .5L7.800 5.500H.2z" fill="#0d9fd8"/></svg>
<span class="t" style="left:580.00px;top:1153.00px;font-size:12.5px;line-height:16px;color:#0d9fd8;font-weight:700;letter-spacing:-0.150px;transform:scaleX(0.8190);transform-origin:0 50%;">VERZÖGERUNG</span>
<svg style="left:671px;top:1153.5px;" width="8" height="6" viewBox="0 0 8 6"><path d="M4 .5L7.800 5.500H.2z" fill="#0d9fd8"/></svg>
<span class="t" style="left:794.50px;top:1153.00px;font-size:12.5px;line-height:16px;color:#0d9fd8;font-weight:700;letter-spacing:-0.150px;transform:scaleX(0.7855);transform-origin:0 50%;">KURS</span>
<svg style="left:824px;top:1153.5px;" width="8" height="6" viewBox="0 0 8 6"><path d="M4 .5L7.800 5.500H.2z" fill="#0d9fd8"/></svg>
<span class="t" style="left:894.00px;top:1153.00px;font-size:12.5px;line-height:16px;color:#0d9fd8;font-weight:700;letter-spacing:-0.150px;transform:scaleX(0.8144);transform-origin:0 50%;">ÄND. ABS</span>
<svg style="left:947px;top:1153.5px;" width="8" height="6" viewBox="0 0 8 6"><path d="M4 .5L7.800 5.500H.2z" fill="#0d9fd8"/></svg>
<span class="t" style="left:1155.00px;top:1153.00px;font-size:12.5px;line-height:16px;color:#0d9fd8;font-weight:700;">%</span>
<svg style="left:1168px;top:1153.5px;" width="8" height="6" viewBox="0 0 8 6"><path d="M4 .5L7.800 5.500H.2z" fill="#0d9fd8"/></svg>
<span class="t" style="left:1239.50px;top:1153.00px;font-size:12.5px;line-height:16px;color:#0d9fd8;font-weight:700;letter-spacing:-0.150px;transform:scaleX(0.8339);transform-origin:0 50%;">G.MENGE</span>
<span class="t" style="left:1414.00px;top:1153.00px;font-size:12.5px;line-height:16px;color:#0d9fd8;font-weight:700;letter-spacing:-0.150px;transform:scaleX(0.8455);transform-origin:0 50%;">GELD</span>
<svg style="left:1445px;top:1153.5px;" width="8" height="6" viewBox="0 0 8 6"><path d="M4 .5L7.800 5.500H.2z" fill="#0d9fd8"/></svg>
<span class="t" style="left:1565.00px;top:1153.00px;font-size:12.5px;line-height:16px;color:#0d9fd8;font-weight:700;letter-spacing:-0.150px;transform:scaleX(0.8122);transform-origin:0 50%;">BRIEF</span>
<svg style="left:1597px;top:1153.5px;" width="8" height="6" viewBox="0 0 8 6"><path d="M4 .5L7.800 5.500H.2z" fill="#0d9fd8"/></svg>
<span class="t" style="left:1669.50px;top:1153.00px;font-size:12.5px;line-height:16px;color:#0d9fd8;font-weight:700;letter-spacing:-0.150px;transform:scaleX(0.8265);transform-origin:0 50%;">B.MENGE</span>
<svg style="left:1720px;top:1153.5px;" width="8" height="6" viewBox="0 0 8 6"><path d="M4 .5L7.800 5.500H.2z" fill="#0d9fd8"/></svg>
<span class="t" style="left:1794.00px;top:1153.00px;font-size:12.5px;line-height:16px;color:#0d9fd8;font-weight:700;letter-spacing:-0.150px;transform:scaleX(0.8088);transform-origin:0 50%;">UMSATZ GESAMT</span>
<svg style="left:1883px;top:1153.5px;" width="8" height="6" viewBox="0 0 8 6"><path d="M4 .5L7.800 5.500H.2z" fill="#0d9fd8"/></svg>
<svg style="left:1290px;top:1153.5px;" width="8" height="6" viewBox="0 0 8 6"><path d="M4 .5L7.800 5.500H.2z" fill="#e8eef0"/></svg>
<div style="left:60px;top:1150px;width:1px;height:10px;border-left:1px dotted #17425a;"></div>
<div style="left:275px;top:1150px;width:1px;height:10px;border-left:1px dotted #17425a;"></div>
<div style="left:397px;top:1150px;width:1px;height:10px;border-left:1px dotted #17425a;"></div>
<div style="left:561px;top:1150px;width:1px;height:10px;border-left:1px dotted #17425a;"></div>
<div style="left:684px;top:1150px;width:1px;height:10px;border-left:1px dotted #17425a;"></div>
<div style="left:836px;top:1150px;width:1px;height:10px;border-left:1px dotted #17425a;"></div>
<div style="left:1180px;top:1150px;width:1px;height:10px;border-left:1px dotted #17425a;"></div>
<div style="left:1302px;top:1150px;width:1px;height:10px;border-left:1px dotted #17425a;"></div>
<div style="left:1456px;top:1150px;width:1px;height:10px;border-left:1px dotted #17425a;"></div>
<div style="left:1609.5px;top:1150px;width:1px;height:10px;border-left:1px dotted #17425a;"></div>
<div style="left:1732px;top:1150px;width:1px;height:10px;border-left:1px dotted #17425a;"></div>
<div style="left:10px;top:193px;width:891px;height:353px;background:#011520;border:1px solid #0c3447;box-shadow:0 4px 8px 0 rgba(0,0,0,.32);"></div>
<svg style="left:15px;top:186.5px;" width="16" height="7.5" viewBox="0 0 16 7.500"><path d="M0 7.500L8 .3L16 7.500z" fill="#011520"/><path d="M0 7.500L8 .5L16 7.500" stroke="#0c3447" stroke-width="1" fill="none"/></svg>
<div style="left:16px;top:231px;width:880px;height:1.2px;background:#2b4755;"></div>
<span class="t" style="left:22.70px;top:205.50px;font-size:14.5px;line-height:19px;color:#fff;font-weight:700;letter-spacing:0.530px;">Märkte</span>
<span class="t" style="left:84.00px;top:205.50px;font-size:14.8px;line-height:19px;color:#cdd6da;letter-spacing:-0.132px;">Screener</span>
<span class="t" style="left:154.00px;top:205.50px;font-size:14.8px;line-height:19px;color:#cdd6da;letter-spacing:-0.216px;">Compass</span>
<span class="t" style="left:226.50px;top:205.50px;font-size:14.8px;line-height:19px;color:#cdd6da;letter-spacing:0.070px;">Regulatorische Preisfindung</span>
<span class="t" style="left:425.00px;top:205.50px;font-size:14.8px;line-height:19px;color:#cdd6da;letter-spacing:-0.106px;">Data Manager Compact</span>
<span class="t" style="left:592.00px;top:205.50px;font-size:14.8px;line-height:19px;color:#cdd6da;letter-spacing:-0.055px;">Mehr</span>
<svg style="left:633.0px;top:212.0px;" width="12.0" height="7.0" viewBox="0 0 12 7"><path d="M1 1L6 6L11 1" stroke="#cdd6da" stroke-width="1.8" fill="none" stroke-linecap="round" stroke-linejoin="round"/></svg>
<div style="left:670px;top:202px;width:222px;height:26.5px;background:#021a27;border:1.5px solid #0d9fd8;border-radius:2px;"></div>
<svg style="left:676px;top:209px;" width="14" height="14" viewBox="0 0 14 14"><path d="M.5 1H13.500L8.500 7V13L5.500 11.500V7z" fill="#0d9fd8"/></svg>
<span class="t" style="left:32.30px;top:244.80px;font-size:13.6px;line-height:18px;color:#f4f6f7;letter-spacing:-0.350px;">Equity</span>
<div style="left:26px;top:269px;width:160px;height:30px;background:#0e6f63;"></div>
<span class="t" style="left:36.20px;top:277.00px;font-size:13.2px;line-height:17px;color:rgba(255,255,255,.74);letter-spacing:-0.007px;">Deutschland</span>
<div style="left:26px;top:301px;width:160px;height:30px;background:#0e6f63;"></div>
<span class="t" style="left:36.20px;top:309.00px;font-size:13.2px;line-height:17px;color:rgba(255,255,255,.74);letter-spacing:-0.128px;">Europe</span>
<div style="left:26px;top:333px;width:160px;height:30px;background:#0e6f63;"></div>
<span class="t" style="left:36.20px;top:341.00px;font-size:13.2px;line-height:17px;color:rgba(255,255,255,.74);letter-spacing:0.008px;">Nordics</span>
<div style="left:26px;top:365px;width:160px;height:30px;background:#0e6f63;"></div>
<span class="t" style="left:36.20px;top:373.00px;font-size:13.2px;line-height:17px;color:rgba(255,255,255,.74);letter-spacing:0.017px;">North-America</span>
<div style="left:26px;top:397px;width:160px;height:30px;background:#0e6f63;"></div>
<span class="t" style="left:36.20px;top:405.00px;font-size:13.2px;line-height:17px;color:rgba(255,255,255,.74);letter-spacing:-0.086px;">World</span>
<span class="t" style="left:206.30px;top:244.80px;font-size:13.6px;line-height:18px;color:#f4f6f7;letter-spacing:-0.350px;">Fixed income</span>
<div style="left:201px;top:269px;width:160px;height:30px;background:#2d378a;"></div>
<span class="t" style="left:211.20px;top:277.00px;font-size:13.2px;line-height:17px;color:rgba(255,255,255,.74);">Corporate bonds</span>
<div style="left:201px;top:301px;width:160px;height:30px;background:#2d378a;"></div>
<span class="t" style="left:211.20px;top:309.00px;font-size:13.2px;line-height:17px;color:rgba(255,255,255,.74);letter-spacing:0.033px;">Government bonds</span>
<div style="left:201px;top:333px;width:160px;height:30px;background:#2d378a;"></div>
<span class="t" style="left:211.20px;top:341.00px;font-size:13.2px;line-height:17px;color:rgba(255,255,255,.74);letter-spacing:-0.150px;transform:scaleX(0.9877);transform-origin:0 50%;">Mortgage based</span>
<span class="t" style="left:206.30px;top:387.50px;font-size:13.6px;line-height:18px;color:#f4f6f7;letter-spacing:-0.350px;">Sustainability</span>
<div style="left:201px;top:412px;width:160px;height:30px;background:#2d378a;"></div>
<span class="t" style="left:211.20px;top:420.00px;font-size:13.2px;line-height:17px;color:rgba(255,255,255,.74);letter-spacing:-0.026px;">Bonds</span>
<div style="left:201px;top:444px;width:160px;height:30px;background:#2d378a;"></div>
<span class="t" style="left:211.20px;top:452.00px;font-size:13.2px;line-height:17px;color:rgba(255,255,255,.74);letter-spacing:0.102px;">Equity</span>
<div style="left:201px;top:476px;width:160px;height:30px;background:#2d378a;"></div>
<span class="t" style="left:211.20px;top:484.00px;font-size:13.2px;line-height:17px;color:rgba(255,255,255,.74);letter-spacing:-0.177px;">Funds</span>
<span class="t" style="left:381.30px;top:244.80px;font-size:13.6px;line-height:18px;color:#f4f6f7;letter-spacing:-0.350px;">Investment funds</span>
<div style="left:376px;top:269px;width:161px;height:30px;background:#643f8d;"></div>
<span class="t" style="left:386.20px;top:277.00px;font-size:13.2px;line-height:17px;color:rgba(255,255,255,.74);letter-spacing:0.051px;">Bond funds</span>
<div style="left:376px;top:301px;width:161px;height:30px;background:#643f8d;"></div>
<span class="t" style="left:386.20px;top:309.00px;font-size:13.2px;line-height:17px;color:rgba(255,255,255,.74);letter-spacing:0.096px;">Equity funds</span>
<div style="left:376px;top:333px;width:161px;height:30px;background:#643f8d;"></div>
<span class="t" style="left:386.20px;top:341.00px;font-size:13.2px;line-height:17px;color:rgba(255,255,255,.74);letter-spacing:-0.034px;">Mixed funds</span>
<span class="t" style="left:557.30px;top:244.80px;font-size:13.6px;line-height:18px;color:#f4f6f7;letter-spacing:-0.350px;">Money market</span>
<div style="left:552px;top:269px;width:160px;height:30px;background:#80224d;"></div>
<span class="t" style="left:562.20px;top:277.00px;font-size:13.2px;line-height:17px;color:rgba(255,255,255,.74);letter-spacing:-0.150px;transform:scaleX(0.9271);transform-origin:0 50%;">FX Cross rates</span>
<div style="left:552px;top:301px;width:160px;height:30px;background:#80224d;"></div>
<span class="t" style="left:562.20px;top:309.00px;font-size:13.2px;line-height:17px;color:rgba(255,255,255,.74);letter-spacing:-0.069px;">Money market</span>
<div style="left:552px;top:333px;width:160px;height:30px;background:#80224d;"></div>
<span class="t" style="left:562.20px;top:341.00px;font-size:13.2px;line-height:17px;color:rgba(255,255,255,.74);letter-spacing:-0.161px;">Treasury</span>
<span class="t" style="left:736.20px;top:241.50px;font-size:13.6px;line-height:18px;color:#f4f6f7;letter-spacing:-0.350px;">Derivatives</span>
<div style="left:729px;top:269px;width:156px;height:30px;background:#837436;"></div>
<span class="t" style="left:739.20px;top:277.00px;font-size:13.2px;line-height:17px;color:rgba(255,255,255,.74);letter-spacing:0.070px;">Crypto</span>
<svg style="left:869.0px;top:246.5px;" width="12.0" height="7.0" viewBox="0 0 12 7"><path d="M1 1L6 6L11 1" stroke="#f4f6f7" stroke-width="2" fill="none" stroke-linecap="round" stroke-linejoin="round"/></svg>
<svg style="left:12px;top:188px;" width="33" height="98" viewBox="0 0 33 98"><path d="M16.300 4.200L31 34H21.100V96H11V34H1.100z" fill="#fbbd12"/></svg>
<svg style="left:29.5px;top:176px;" width="18" height="25" viewBox="0 0 18 25"><path d="M6.300 1c1 0 1.700.8 1.700 1.800V9.200c.2-.5.800-.8 1.400-.8.800 0 1.400.5 1.600 1.200.3-.4.800-.6 1.300-.6.800 0 1.500.6 1.600 1.400.3-.3.700-.4 1.100-.4.900 0 1.600.7 1.600 1.600v4.600c0 1.700-.4 2.900-1 4-.4.800-.6 1.500-.6 2.300V24H6.800v-.8c0-.8-.4-1.500-1-2.200L1.600 16.500c-.6-.7-.6-1.700.1-2.300.7-.6 1.600-.5 2.300.1l.6.600V2.800c0-1 .7-1.800 1.700-1.800z" fill="#fff" stroke="#1a1a1a" stroke-width="1" stroke-linejoin="round"/><path d="M8 9.500V14M11 10V14M14 11V14" stroke="#1a1a1a" stroke-width=".8"/></svg>
</div></body></html>
